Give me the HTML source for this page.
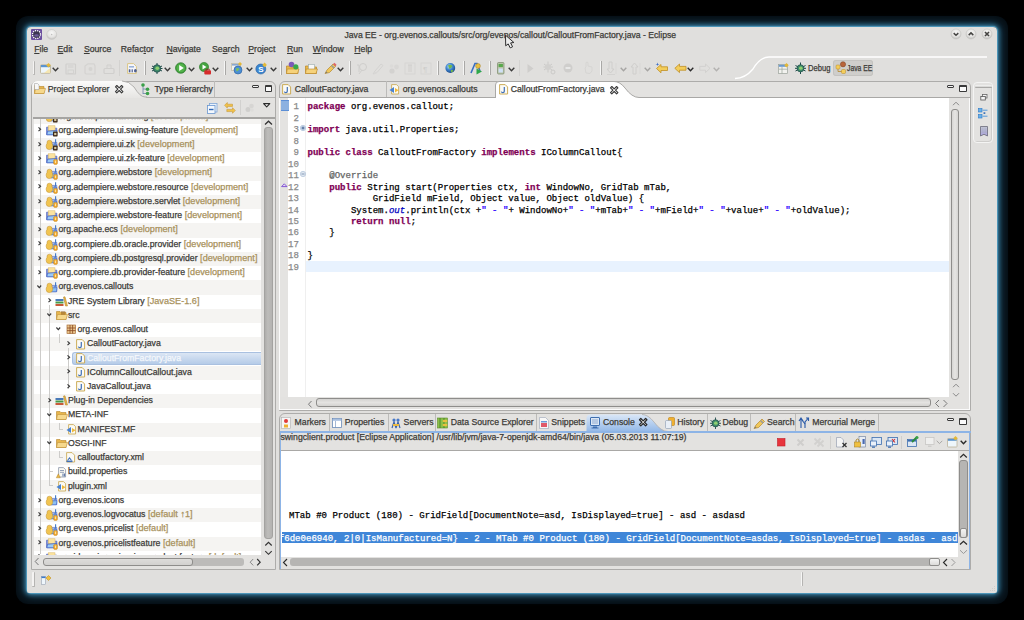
<!DOCTYPE html>
<html><head><meta charset="utf-8">
<style>
*{margin:0;padding:0;box-sizing:border-box}
html,body{width:1024px;height:620px;overflow:hidden;background:#000}
body{position:relative;font-family:"Liberation Sans",sans-serif;font-size:8.7px;color:#3c3c3c}
.a{position:absolute}
svg.a{overflow:visible}
#glow{position:absolute;left:27px;top:27px;width:970px;height:566px;border-radius:4px;box-shadow:0 0 1px 1px rgba(80,155,190,1),0 0 4px 2px rgba(60,135,170,.85),0 0 9px 4px rgba(35,90,120,.7),0 0 0 11px rgba(6,14,20,1)}
#win{position:absolute;left:27px;top:27px;width:970px;height:566px;background:#e0dfdd;border-radius:4px 4px 2px 2px;overflow:hidden}
.t{position:absolute;white-space:pre;line-height:10px;-webkit-text-stroke:0.25px currentColor}
.mono{font-family:"Liberation Mono",monospace;line-height:11px}
.k{color:#7f0055;font-weight:bold}.an{color:#646464}.s{color:#2a00ff}.f{color:#0000c0;font-style:italic}
u{text-decoration:underline;text-underline-offset:1px}
</style></head><body>
<div id="glow"></div>
<div id="win"></div>
<svg class="a" style="left:31px;top:29px" width="11" height="11" viewBox="0 0 11 11"><rect x="0" y="0" width="11" height="11" rx="1" fill="#6b4fa0"/><circle cx="5.5" cy="5.5" r="4" fill="#3a3450" stroke="#fff" stroke-width="1.3" stroke-dasharray="1.2 0.9"/><ellipse cx="5.5" cy="6.5" rx="2.4" ry="1.2" fill="#6a5a98"/></svg>
<svg class="a" style="left:46px;top:29px" width="12" height="12" viewBox="0 0 12 12"><defs><radialGradient id="wbg" cx="50%" cy="35%" r="60%"><stop offset="0" stop-color="#f7f7f6"/><stop offset=".7" stop-color="#e4e3e1"/><stop offset="1" stop-color="#c4c3c1"/></radialGradient></defs><circle cx="5.7" cy="5.5" r="5" fill="url(#wbg)" stroke="#c8c7c5" stroke-width=".6"/><circle cx="5.7" cy="5.5" r=".7" fill="#bbb"/></svg>
<div class="t" style="left:344.50px;top:29.51px;font-size:8.64px;color:#3c3b37;">Java EE - org.evenos.callouts/src/org/evenos/callout/CalloutFromFactory.java - Eclipse</div>
<svg class="a" style="left:949.7px;top:28px" width="12" height="13" viewBox="0 0 12 13"><circle cx="6" cy="6" r="5" fill="url(#wbg)" stroke="#c3c2c0" stroke-width=".6"/><path transform="translate(6 6)" d="M-2.3 -0.9 L0 1.2 L2.3 -0.9" stroke="#454442" stroke-width="1.5" fill="none"/></svg>
<svg class="a" style="left:965.3px;top:28px" width="12" height="13" viewBox="0 0 12 13"><circle cx="6" cy="6" r="5" fill="url(#wbg)" stroke="#c3c2c0" stroke-width=".6"/><path transform="translate(6 6)" d="M-2.3 1.1 L0 -1.1 L2.3 1.1" stroke="#454442" stroke-width="1.5" fill="none"/></svg>
<svg class="a" style="left:980.9px;top:28px" width="12" height="13" viewBox="0 0 12 13"><circle cx="6" cy="6" r="5" fill="url(#wbg)" stroke="#c3c2c0" stroke-width=".6"/><path transform="translate(6 6)" d="M-2 -2 L2 2 M2 -2 L-2 2" stroke="#454442" stroke-width="1.6" fill="none"/></svg>
<div class="a" style="left:33px;top:61px;width:2px;height:14px;background:#f4f3f2;border-right:1px solid #b5b4b2;border-bottom:1px solid #b5b4b2;border-radius:1px"></div>
<svg class="a" style="left:40px;top:63px" width="12" height="11" viewBox="0 0 12 11"><rect x="0.5" y="1.8" width="10" height="8.5" rx=".8" fill="#eef6fb" stroke="#bdb49a" stroke-width=".9"/><rect x="0.9" y="2" width="9.2" height="2.2" fill="#5b94cf"/><path d="M4 9.9 L10.1 9.9 L10.1 5Z" fill="#f6e2a0" opacity=".8"/><path d="M8.5 0 L10.8 2.3 L8.5 4.6 L6.2 2.3Z" fill="#e3b838"/></svg>
<svg class="a" style="left:52px;top:66.5px" width="7" height="5" viewBox="0 0 7 5"><path d="M0.7 0.8 L3.5 3.8 L6.3 0.8" stroke="#3a3a3a" stroke-width="1.4" fill="none"/></svg>
<svg class="a" style="left:65px;top:63px" width="12" height="12" viewBox="0 0 12 12"><rect x="1" y="1" width="9.5" height="10" rx=".6" fill="none" stroke="#d0cfcd" stroke-width="1.2"/><rect x="3" y="1.5" width="5.5" height="3.5" fill="#d8d7d5"/><rect x="3" y="7" width="5.5" height="3.5" fill="none" stroke="#d0cfcd" stroke-width=".8"/></svg>
<svg class="a" style="left:84px;top:63px" width="12" height="12" viewBox="0 0 12 12"><path d="M1 3 L4 0.8 L10 0.8 L11 3 L11 11 L2 11 L1 10Z" fill="none" stroke="#d4d3d1" stroke-width="1.2"/><circle cx="6.5" cy="6" r="2" fill="#d4d3d1"/></svg>
<svg class="a" style="left:103px;top:63px" width="12" height="12" viewBox="0 0 12 12"><rect x="1" y="5.5" width="10" height="5" rx="1" fill="none" stroke="#d0cfcd" stroke-width="1.2"/><path d="M4 6 L4 2 L8 2 L8 6" fill="none" stroke="#d0cfcd" stroke-width="1"/><path d="M6 1 L6 4" stroke="#d8d7d5"/></svg>
<div class="a" style="left:119px;top:60px;width:1px;height:16px;background:#d3d2d0"></div>
<svg class="a" style="left:127px;top:63px" width="11" height="11" viewBox="0 0 11 11"><path d="M0.6 0.6 L6.5 0.6 L9.4 3.4 L9.4 10.4 L0.6 10.4Z" fill="#f7f7fb" stroke="#d8c27a" stroke-width=".9"/><rect x="2" y="3" width="5" height="1.6" fill="#9bb3d9"/><rect x="1.8" y="6.3" width="1.6" height="3" fill="#4d5f90"/><rect x="4.6" y="6.3" width="1.2" height="3" fill="#4d5f90"/><ellipse cx="8.4" cy="7.8" rx="1.4" ry="1.7" fill="#4d5f90"/></svg>
<div class="a" style="left:144px;top:61px;width:1px;height:14px;background:#f6f6f5"></div>
<div class="a" style="left:145px;top:61px;width:1px;height:14px;background:#a9a8a6"></div>
<svg class="a" style="left:151px;top:62px" width="12" height="13" viewBox="0 0 12 13"><g stroke="#1f4a4a" stroke-width="1"><path d="M1 4 L11 9 M1 9 L11 4 M6 1 L6 12 M0.5 6.5 L11.5 6.5"/></g><ellipse cx="6" cy="6.5" rx="3.6" ry="3.8" fill="#3f8a6a" stroke="#1f4a4a" stroke-width=".8"/><ellipse cx="6.3" cy="6.3" rx="1.9" ry="1.7" fill="#8fd070"/></svg>
<svg class="a" style="left:164px;top:66.5px" width="7" height="5" viewBox="0 0 7 5"><path d="M0.7 0.8 L3.5 3.8 L6.3 0.8" stroke="#3a3a3a" stroke-width="1.4" fill="none"/></svg>
<svg class="a" style="left:175px;top:62px" width="12" height="12" viewBox="0 0 12 12"><circle cx="5.8" cy="6" r="5.3" fill="#3f9b3c" stroke="#2b7a2a" stroke-width=".7"/><circle cx="5.8" cy="6" r="4.2" fill="#52b34a"/><path d="M4.2 3 L8.8 6 L4.2 9Z" fill="#fff"/></svg>
<svg class="a" style="left:188px;top:66.5px" width="7" height="5" viewBox="0 0 7 5"><path d="M0.7 0.8 L3.5 3.8 L6.3 0.8" stroke="#3a3a3a" stroke-width="1.4" fill="none"/></svg>
<svg class="a" style="left:199px;top:62px" width="13" height="13" viewBox="0 0 13 13"><circle cx="5" cy="5" r="4.6" fill="#44a340" stroke="#2b7a2a" stroke-width=".6"/><path d="M3.5 2.6 L7.5 5 L3.5 7.4Z" fill="#fff"/><rect x="5.3" y="8.2" width="6.7" height="4.3" rx="1" fill="#d62c2c"/><path d="M7 8.3 L7 7.2 L10.3 7.2 L10.3 8.3" stroke="#8a1f1f" stroke-width=".8" fill="none"/></svg>
<svg class="a" style="left:212px;top:66.5px" width="7" height="5" viewBox="0 0 7 5"><path d="M0.7 0.8 L3.5 3.8 L6.3 0.8" stroke="#3a3a3a" stroke-width="1.4" fill="none"/></svg>
<div class="a" style="left:224px;top:61px;width:1px;height:14px;background:#f6f6f5"></div>
<div class="a" style="left:225px;top:61px;width:1px;height:14px;background:#a9a8a6"></div>
<svg class="a" style="left:231px;top:62px" width="12" height="13" viewBox="0 0 12 13"><rect x=".5" y="1.5" width="9" height="7" fill="#f2f2ef" stroke="#c7c0a8" stroke-width=".8"/><rect x=".9" y="1.8" width="8.2" height="1.8" fill="#8aa7cf"/><circle cx="7" cy="8" r="4" fill="#4b8fd4" stroke="#2a5d9c" stroke-width=".6"/><path d="M5 6.5 Q7 5.5 8.5 7 Q7 9 5.5 9.5Z" fill="#7fc15a"/><path d="M9 0 L11 2 L9 4 L7 2Z" fill="#e3b838"/></svg>
<svg class="a" style="left:246px;top:66.5px" width="7" height="5" viewBox="0 0 7 5"><path d="M0.7 0.8 L3.5 3.8 L6.3 0.8" stroke="#3a3a3a" stroke-width="1.4" fill="none"/></svg>
<svg class="a" style="left:255px;top:62px" width="13" height="13" viewBox="0 0 13 13"><circle cx="5.8" cy="7" r="5" fill="#3b85cf" stroke="#2a62a0" stroke-width=".6"/><text x="3.3" y="10" font-family="Liberation Sans" font-weight="bold" font-size="8" fill="#fff">S</text><path d="M9.6 0.6 L11.9 2.9 L9.6 5.2 L7.3 2.9Z" fill="#e3b838"/></svg>
<svg class="a" style="left:270px;top:66.5px" width="7" height="5" viewBox="0 0 7 5"><path d="M0.7 0.8 L3.5 3.8 L6.3 0.8" stroke="#3a3a3a" stroke-width="1.4" fill="none"/></svg>
<div class="a" style="left:280px;top:61px;width:1px;height:14px;background:#f6f6f5"></div>
<div class="a" style="left:281px;top:61px;width:1px;height:14px;background:#a9a8a6"></div>
<svg class="a" style="left:286px;top:61px" width="14" height="14" viewBox="0 0 14 14"><path d="M0.5 5 L4.5 5 L5.5 6 L12 6 L12 12.5 L0.5 12.5Z" fill="#e9b748" stroke="#b8862a" stroke-width=".7"/><path d="M1.2 8 L13 8 L11.5 12.5 L0.5 12.5Z" fill="#f6d27a" stroke="#b8862a" stroke-width=".6"/><circle cx="5.5" cy="3.5" r="2.8" fill="#7d5ab8"/><circle cx="9.8" cy="5.8" r="2.6" fill="#39a94a"/></svg>
<svg class="a" style="left:305px;top:62px" width="13" height="13" viewBox="0 0 13 13"><path d="M0.5 4 L4.5 4 L5.5 5 L11.5 5 L11.5 11.5 L0.5 11.5Z" fill="#e9b748" stroke="#b8862a" stroke-width=".7"/><rect x="3.5" y="2.5" width="6" height="5" fill="#f8f8f8" stroke="#9aa" stroke-width=".6"/><path d="M1.2 7 L12.5 7 L11 11.5 L0.5 11.5Z" fill="#f6d27a" stroke="#b8862a" stroke-width=".6"/></svg>
<svg class="a" style="left:324px;top:62px" width="13" height="13" viewBox="0 0 13 13"><path d="M1 11.5 L3 8 L9 2 L11.5 4.5 L5.5 10.5Z" fill="#f0c75a" stroke="#b5882f" stroke-width=".7"/><path d="M7.5 3.5 L10 6" stroke="#9a9a9a" stroke-width="1.6"/><path d="M1 11.5 L2.5 9.5 L3.5 10.5Z" fill="#777"/><path d="M9 2 L10.5 0.8 L12.5 2.8 L11.5 4.5Z" fill="#d66"/></svg>
<svg class="a" style="left:337px;top:66.5px" width="7" height="5" viewBox="0 0 7 5"><path d="M0.7 0.8 L3.5 3.8 L6.3 0.8" stroke="#3a3a3a" stroke-width="1.4" fill="none"/></svg>
<div class="a" style="left:349px;top:61px;width:1px;height:14px;background:#f6f6f5"></div>
<div class="a" style="left:350px;top:61px;width:1px;height:14px;background:#a9a8a6"></div>
<svg class="a" style="left:355px;top:62px" width="13" height="14" viewBox="0 0 13 14"><g fill="none" stroke="#cfcecc" stroke-width="1"><circle cx="8" cy="5" r="3.5"/><path d="M2 3 L4 3 L4 10 M4 12 L7 8"/></g></svg>
<svg class="a" style="left:372px;top:62px" width="12" height="13" viewBox="0 0 12 13"><path d="M1 12 L3 9 L9 2 L11 3.5 L5 10.5Z" fill="none" stroke="#d4d3d1" stroke-width="1"/><path d="M2 12 L5 10" stroke="#d8d7d5" stroke-width="1.5"/></svg>
<svg class="a" style="left:388px;top:62px" width="12" height="13" viewBox="0 0 12 13"><circle cx="4" cy="9" r="2.6" fill="#d3d2d0"/><circle cx="8.5" cy="5" r="2.4" fill="#d8d7d5"/><circle cx="3.5" cy="4" r="1.8" fill="#dbdad8"/></svg>
<svg class="a" style="left:404px;top:62px" width="12" height="13" viewBox="0 0 12 13"><rect x="1" y="1" width="10" height="11" fill="none" stroke="#d6d5d3" stroke-width="1"/><path d="M5 3 L5 10 M7 3 L7 10 M4 3 L8 3" stroke="#cfcecc" stroke-width=".9"/></svg>
<svg class="a" style="left:420px;top:62px" width="12" height="13" viewBox="0 0 12 13"><rect x="1" y="1" width="10" height="11" fill="none" stroke="#d6d5d3" stroke-width="1"/><text x="3" y="10" font-family="Liberation Sans" font-size="8" fill="#cfcecc">¶</text></svg>
<div class="a" style="left:437px;top:61px;width:1px;height:14px;background:#f6f6f5"></div>
<div class="a" style="left:438px;top:61px;width:1px;height:14px;background:#a9a8a6"></div>
<svg class="a" style="left:445px;top:62px" width="11" height="12" viewBox="0 0 11 12"><defs><radialGradient id="glb" cx="40%" cy="35%" r="65%"><stop offset="0" stop-color="#bfe3ff"/><stop offset=".5" stop-color="#3f86d0"/><stop offset="1" stop-color="#1f4f8f"/></radialGradient></defs><circle cx="5.3" cy="6" r="4.9" fill="url(#glb)"/><path d="M3 3.5 Q5.5 2 7.5 4 Q6 6.5 4.5 7 Z M6 8 Q8 7.5 8.5 9 Q7 10.5 6 10Z" fill="#74b84a"/></svg>
<div class="a" style="left:462.5px;top:61px;width:1px;height:14px;background:#f6f6f5"></div>
<div class="a" style="left:463.5px;top:61px;width:1px;height:14px;background:#a9a8a6"></div>
<svg class="a" style="left:470px;top:62px" width="13" height="13" viewBox="0 0 13 13"><path d="M1 11 L5 1.5 L7 1.5 L10 9" fill="none" stroke="#3a6fc0" stroke-width="1.6"/><circle cx="8" cy="4" r="2.4" fill="#e8c040" stroke="#a67c20" stroke-width=".5"/><path d="M6.5 6.5 L12 9.5 L6.5 12.5Z" fill="#2ea84a"/></svg>
<div class="a" style="left:489px;top:61px;width:1px;height:14px;background:#f6f6f5"></div>
<div class="a" style="left:490px;top:61px;width:1px;height:14px;background:#a9a8a6"></div>
<svg class="a" style="left:497px;top:62px" width="8" height="13" viewBox="0 0 8 13"><rect x=".5" y=".5" width="6.5" height="11.5" rx="1" fill="#b9c3a8" stroke="#7a8a6a" stroke-width=".7"/><rect x="1.6" y="2" width="4.3" height="3" fill="#58a84c"/><rect x="1.6" y="6.5" width="4.3" height="4" fill="#cfe0f4"/></svg>
<svg class="a" style="left:508px;top:66.5px" width="7" height="5" viewBox="0 0 7 5"><path d="M0.7 0.8 L3.5 3.8 L6.3 0.8" stroke="#3a3a3a" stroke-width="1.4" fill="none"/></svg>
<div class="a" style="left:518.5px;top:60px;width:1px;height:16px;background:#d3d2d0"></div>
<svg class="a" style="left:526px;top:62px" width="9" height="13" viewBox="0 0 9 13"><path d="M1.5 2 L7.5 6.5 L1.5 11Z" fill="#cfcecc"/></svg>
<svg class="a" style="left:543px;top:61px" width="13" height="14" viewBox="0 0 13 14"><g stroke="#cbcac8" stroke-width="1"><path d="M1 3 L9 9 M1 9 L9 3 M5 0.5 L5 11.5 M0.5 6 L10 6"/></g><circle cx="5" cy="6" r="3" fill="#d2d1cf"/><circle cx="10" cy="11" r="2" fill="none" stroke="#cbcac8"/></svg>
<svg class="a" style="left:563px;top:62px" width="11" height="12" viewBox="0 0 11 12"><circle cx="5" cy="6" r="4.5" fill="#cfcecc"/><rect x="2.5" y="5.2" width="5" height="1.6" fill="#eee"/></svg>
<svg class="a" style="left:582px;top:61px" width="12" height="14" viewBox="0 0 12 14"><path d="M4 12 L3 7 L4 6 L4 1.5 Q5 0.8 6 1.5 L6 5 L10 6 L10 10 L8 12.5Z" fill="none" stroke="#d6d5d3" stroke-width="1"/></svg>
<div class="a" style="left:600px;top:61px;width:1px;height:14px;background:#f6f6f5"></div>
<div class="a" style="left:601px;top:61px;width:1px;height:14px;background:#a9a8a6"></div>
<svg class="a" style="left:606px;top:61px" width="11" height="15" viewBox="0 0 11 15"><path d="M3 1 L6 1 L6 8 L8 8 L4.5 12 L1 8 L3 8Z" fill="none" stroke="#cfcecc" stroke-width="1"/><path d="M1 13.5 L9 13.5" stroke="#d4d3d1"/><path d="M10 2 L10 13" stroke="#d8d7d5"/></svg>
<svg class="a" style="left:620px;top:66.5px" width="7" height="5" viewBox="0 0 7 5"><path d="M0.7 0.8 L3.5 3.8 L6.3 0.8" stroke="#a6a5a3" stroke-width="1.4" fill="none"/></svg>
<svg class="a" style="left:630px;top:61px" width="11" height="15" viewBox="0 0 11 15"><path d="M3 13 L6 13 L6 6 L8 6 L4.5 2 L1 6 L3 6Z" fill="none" stroke="#cfcecc" stroke-width="1"/><path d="M10 2 L10 13" stroke="#d8d7d5"/></svg>
<svg class="a" style="left:644px;top:66.5px" width="7" height="5" viewBox="0 0 7 5"><path d="M0.7 0.8 L3.5 3.8 L6.3 0.8" stroke="#a6a5a3" stroke-width="1.4" fill="none"/></svg>
<svg class="a" style="left:655px;top:62px" width="14" height="12" viewBox="0 0 14 12"><path d="M1.5 6.5 L6 2.5 L6 4.8 L12.5 4.8 L12.5 8.5 L6 8.5 L6 10.8Z" fill="#f3cd5a" stroke="#c08f25" stroke-width=".8"/><path d="M2.5 0.5 L3 2 L4.5 2.3 L3 2.7 L2.5 4 L2 2.7 L0.5 2.3 L2 2Z" fill="#3c6fc5"/></svg>
<svg class="a" style="left:674px;top:62px" width="13" height="12" viewBox="0 0 13 12"><path d="M0.8 6.3 L5.5 2 L5.5 4.4 L12 4.4 L12 8.2 L5.5 8.2 L5.5 10.6Z" fill="#f3cd5a" stroke="#c08f25" stroke-width=".8"/></svg>
<svg class="a" style="left:687px;top:66.5px" width="7" height="5" viewBox="0 0 7 5"><path d="M0.7 0.8 L3.5 3.8 L6.3 0.8" stroke="#2a2a2a" stroke-width="1.4" fill="none"/></svg>
<svg class="a" style="left:699px;top:62px" width="12" height="12" viewBox="0 0 12 12"><path d="M11 6.3 L6.5 2 L6.5 4.4 L0.8 4.4 L0.8 8.2 L6.5 8.2 L6.5 10.6Z" fill="none" stroke="#d2d1cf" stroke-width="1"/></svg>
<svg class="a" style="left:713px;top:66.5px" width="7" height="5" viewBox="0 0 7 5"><path d="M0.7 0.8 L3.5 3.8 L6.3 0.8" stroke="#b3b2b0" stroke-width="1.4" fill="none"/></svg>
<svg class="a" style="left:735px;top:55px" width="260" height="26" viewBox="0 0 260 26"><path d="M0 23.5 Q10 23.5 18 14 Q25 2 34 2 L252 2" fill="none" stroke="#ffffff" stroke-width="1.3"/></svg>
<svg class="a" style="left:778px;top:63px" width="11" height="11" viewBox="0 0 11 11"><rect x=".5" y="1.5" width="9" height="9" fill="#f2f2ef" stroke="#9aa39a" stroke-width=".7"/><rect x=".8" y="1.8" width="8.4" height="2" fill="#6a9ad0"/><path d="M1 6.2 L9.5 6.2 M4 4 L4 10.5" stroke="#9aa39a" stroke-width=".7"/><path d="M8.5 0 L10.7 2.2 L8.5 4.4 L6.3 2.2Z" fill="#e3b838"/></svg>
<svg class="a" style="left:795px;top:62px" width="11" height="13" viewBox="0 0 11 13"><g stroke="#1f4a4a" stroke-width="1"><path d="M0.5 3.5 L10.5 9 M0.5 9 L10.5 3.5 M5.5 0.5 L5.5 12 M0 6.3 L11 6.3"/></g><ellipse cx="5.5" cy="6.3" rx="3.4" ry="3.6" fill="#3f8a6a" stroke="#1f4a4a" stroke-width=".7"/><ellipse cx="5.8" cy="6.2" rx="1.8" ry="1.6" fill="#8fd070"/></svg>
<div class="t" style="left:807.80px;top:62.99px;font-size:8.7px;color:#3c3b37;transform:scaleX(.875);transform-origin:0 0">Debug</div>
<div class="a" style="left:833px;top:60px;width:40px;height:15.5px;background:#cfcecb;border-radius:3px;box-shadow:inset 0 0 0 1px #c4c3c0"></div>
<svg class="a" style="left:835px;top:61px" width="12" height="14" viewBox="0 0 12 14"><path d="M3 5 L3 10.5 L8 10.5" stroke="#b88a2a" stroke-width=".8" fill="none"/><rect x="1" y="4" width="4" height="4" rx="1" fill="#f3cd5a" stroke="#b88a2a" stroke-width=".5"/><rect x="6.5" y="8.5" width="4" height="4" rx="1" fill="#f3cd5a" stroke="#b88a2a" stroke-width=".5"/><circle cx="8" cy="3.3" r="2.6" fill="#b8643a" stroke="#7a3e20" stroke-width=".5"/></svg>
<div class="t" style="left:847.00px;top:62.99px;font-size:8.7px;color:#3c3b37;transform:scaleX(.78);transform-origin:0 0">Java EE</div>
<div class="a" style="left:31px;top:80.5px;width:244.5px;height:489.5px;border:1px solid #adacaa;border-radius:6px 6px 0 0;background:#e3e2e0"></div>
<svg class="a" style="left:32px;top:81px" width="115" height="17" viewBox="0 0 115 17"><defs><linearGradient id="tabg" x1="0" y1="0" x2="0" y2="1"><stop offset="0" stop-color="#fbfbfa"/><stop offset="1" stop-color="#e6e5e3"/></linearGradient></defs><path d="M0 17 L0 5.5 Q0 0 5.5 0 L90 0 Q97 0 102 6 Q108 16 113 16 L115 16 L115 17Z" fill="url(#tabg)"/><path d="M90 0 Q97 0 102 6 Q108 16 113 16 L115 16" fill="none" stroke="#a9a8a6" stroke-width=".9"/></svg>
<div class="a" style="left:146px;top:97px;width:129px;height:1px;background:#b3b2b0"></div>
<div class="a" style="left:214px;top:81px;width:1px;height:16px;background:#bdbcba"></div>
<svg class="a" style="left:34px;top:83.5px" width="12" height="11" viewBox="0 0 12 11"><path d="M0.5 1.5 L4 1.5 L5 2.5 L10 2.5 L10 9.5 L0.5 9.5Z" fill="#e8b64c" stroke="#b5842a" stroke-width=".6"/><path d="M1.5 4.5 L11.5 4.5 L10 9.5 L0.5 9.5Z" fill="#f6d88c" stroke="#c0923a" stroke-width=".6"/></svg>
<svg class="a" style="left:34px;top:83px" width="6" height="7" viewBox="0 0 6 7"><path d="M0.5 0.5 L3.5 0.5 L5 2 L5 6.5 L0.5 6.5Z" fill="#f7f7f7" stroke="#999" stroke-width=".5"/></svg>
<div class="t" style="left:47.70px;top:83.99px;font-size:8.7px;color:#3c3b37;">Project Explorer</div>
<svg class="a" style="left:114.5px;top:85.3px" width="9" height="9" viewBox="0 0 9 9"><path d="M0.5 1.8 L1.8 0.5 L4.2 2.9 L6.6 0.5 L7.9 1.8 L5.5 4.2 L7.9 6.6 L6.6 7.9 L4.2 5.5 L1.8 7.9 L0.5 6.6 L2.9 4.2Z" fill="#fbfbfb" stroke="#3a3a3a" stroke-width="1.1" stroke-linejoin="round"/></svg>
<svg class="a" style="left:140.5px;top:82.5px" width="9" height="13" viewBox="0 0 9 13"><path d="M2 1.5 L2 11 M2 6 L6 6 M2 10.5 L6 10.5" stroke="#6a86a8" stroke-width=".8" fill="none"/><circle cx="2" cy="2" r="1.8" fill="#3aa048"/><circle cx="6.5" cy="6.2" r="1.8" fill="#3aa048"/><circle cx="6.5" cy="10.5" r="1.8" fill="#3aa048"/></svg>
<div class="t" style="left:154.50px;top:83.99px;font-size:8.7px;color:#3c3b37;">Type Hierarchy</div>
<div class="a" style="left:252px;top:84.5px;width:7px;height:3.5px;border:1px solid #3a3a3a;border-radius:1px;background:#f4f4f4"></div>
<div class="a" style="left:264.5px;top:84.5px;width:7.5px;height:7.5px;border:1px solid #3a3a3a;border-top-width:2px;border-radius:1px;background:#fafafa"></div>
<svg class="a" style="left:207px;top:102.5px" width="11" height="11" viewBox="0 0 11 11"><rect x="2.5" y="0.5" width="7.5" height="8.5" fill="#eaf2fb" stroke="#7fa6d6" stroke-width=".8"/><rect x="0.5" y="2.5" width="7.5" height="8" fill="#f4f8fd" stroke="#6a96cf" stroke-width=".8"/><rect x="2" y="5.8" width="4.5" height="1.4" fill="#2f68b8"/></svg>
<svg class="a" style="left:224px;top:102px" width="12" height="12" viewBox="0 0 12 12"><path d="M0.5 3.3 L3.3 0.5 L3.3 2.2 L8.5 2.2 L8.5 4.4 L3.3 4.4 L3.3 6.1Z" fill="#f2c24a" stroke="#c0902a" stroke-width=".5"/><path d="M11.3 8.5 L8.5 5.7 L8.5 7.4 L2.8 7.4 L2.8 9.6 L8.5 9.6 L8.5 11.3Z" fill="#f2c24a" stroke="#c0902a" stroke-width=".5"/></svg>
<div class="a" style="left:239.5px;top:100px;width:1px;height:15px;background:#d2d1cf"></div>
<svg class="a" style="left:245px;top:103px" width="10" height="10" viewBox="0 0 10 10"><circle cx="3" cy="6.5" r="2.5" fill="#d0cfcd"/><circle cx="6.5" cy="3" r="2.3" fill="#d6d5d3"/><circle cx="7" cy="7" r="1.8" fill="#dddcda"/></svg>
<svg class="a" style="left:263px;top:103.2px" width="8" height="5" viewBox="0 0 8 5"><path d="M0.6 0.6 L6.8 0.6 L3.7 3.9Z" fill="#fafafa" stroke="#2a2a2a" stroke-width="1.1" stroke-linejoin="round"/></svg>
<div class="a" style="left:32.5px;top:117px;width:242px;height:2px;background:#a5a4a2"></div>
<div class="a" style="left:34px;top:119px;width:227px;height:435.5px;overflow:hidden;background:#fff">
<div class="a" style="left:0px;top:-9.53px;width:227px;height:14.235px;background:#f5f4f2"></div>
<div class="a" style="left:0px;top:18.94px;width:227px;height:14.235px;background:#f5f4f2"></div>
<div class="a" style="left:0px;top:47.41px;width:227px;height:14.235px;background:#f5f4f2"></div>
<div class="a" style="left:0px;top:75.88px;width:227px;height:14.235px;background:#f5f4f2"></div>
<div class="a" style="left:0px;top:104.34px;width:227px;height:14.235px;background:#f5f4f2"></div>
<div class="a" style="left:0px;top:132.82px;width:227px;height:14.235px;background:#f5f4f2"></div>
<div class="a" style="left:0px;top:161.28px;width:227px;height:14.235px;background:#f5f4f2"></div>
<div class="a" style="left:0px;top:189.75px;width:227px;height:14.235px;background:#f5f4f2"></div>
<div class="a" style="left:0px;top:218.22px;width:227px;height:14.235px;background:#f5f4f2"></div>
<div class="a" style="left:0px;top:246.69px;width:227px;height:14.235px;background:#f5f4f2"></div>
<div class="a" style="left:0px;top:275.16px;width:227px;height:14.235px;background:#f5f4f2"></div>
<div class="a" style="left:0px;top:303.63px;width:227px;height:14.235px;background:#f5f4f2"></div>
<div class="a" style="left:0px;top:332.1px;width:227px;height:14.235px;background:#f5f4f2"></div>
<div class="a" style="left:0px;top:360.57px;width:227px;height:14.235px;background:#f5f4f2"></div>
<div class="a" style="left:0px;top:389.04px;width:227px;height:14.235px;background:#f5f4f2"></div>
<div class="a" style="left:0px;top:417.51px;width:227px;height:14.235px;background:#f5f4f2"></div>
<div class="a" style="left:5.5px;top:0px;width:1px;height:435px;background:#cdccca"></div>
<div class="a" style="left:15px;top:186.42px;width:1px;height:180.06px;background:#cdccca"></div>
<div class="a" style="left:15px;top:366.48px;width:4px;height:1px;background:#cdccca"></div>
<div class="a" style="left:24.5px;top:214.89px;width:1px;height:9.23px;background:#cdccca"></div>
<div class="a" style="left:34px;top:229.12px;width:1px;height:40.71px;background:#cdccca"></div>
<div class="a" style="left:24.5px;top:303.54px;width:1px;height:6.0px;background:#cdccca"></div>
<div class="a" style="left:24.5px;top:309.54px;width:4.5px;height:1px;background:#cdccca"></div>
<div class="a" style="left:24.5px;top:332.0px;width:1px;height:6.0px;background:#cdccca"></div>
<div class="a" style="left:24.5px;top:338.0px;width:4.5px;height:1px;background:#cdccca"></div>
<div class="a" style="left:15px;top:352.24px;width:4px;height:1px;background:#cdccca"></div>
<svg class="a" style="left:4.2px;top:-5.83px" width="4" height="5" viewBox="0 0 4 5"><path d="M0.5 0.4 L2.6 2.2 L0.5 4.1" stroke="#3a3a3a" stroke-width="1.15" fill="none"/></svg>
<svg class="a" style="left:11.5px;top:-8.23px" width="12" height="12" viewBox="0 0 12 12"><path d="M2 2.5 L5 2.5 L6 3.4 L10.8 3.4 L10.8 9.6 L2 9.6Z" fill="#9fb4e8" stroke="#5a6ab8" stroke-width=".6"/><path d="M5 6 L11 5.6 L10.4 9.8 L5 9.8Z" fill="#8cc0f2" stroke="#3a5cc4" stroke-width=".6"/><path d="M3.3 1.2 Q6 1.2 6 3.6 L6 4.6 Q7 5.6 6.6 7.6 Q6.4 10.6 3.3 10.6 Q0.2 10.6 0.2 7.6 Q0 5.6 1 4.6 L1 3.6 Q1 1.2 3.3 1.2Z" fill="#f1c450" stroke="#c09030" stroke-width=".5"/><path d="M9.6 0.3 L9.6 3.6 Q9.6 4.8 8.4 4.8" stroke="#3f78c8" stroke-width="1.1" fill="none"/><rect x="7" y="6.6" width="4.6" height="4.8" rx=".6" fill="#3e2a1a"/><rect x="8.2" y="7.9" width="2.2" height="2.2" fill="#d8c9a0"/></svg>
<div class="t" style="left:24.50px;top:-8.45px;font-size:8.7px;color:#3c3b37;">org.adempiere.ui.swing<span style="color:#a8915c;font-size:9.15px"> [development]</span></div>
<svg class="a" style="left:4.2px;top:8.4px" width="4" height="5" viewBox="0 0 4 5"><path d="M0.5 0.4 L2.6 2.2 L0.5 4.1" stroke="#3a3a3a" stroke-width="1.15" fill="none"/></svg>
<svg class="a" style="left:11.5px;top:6.0px" width="12" height="12" viewBox="0 0 12 12"><path d="M0.6 2.2 L4 2.2 L5 3.2 L10.8 3.2 L10.8 9.6 L0.6 9.6Z" fill="#8a9ee0" stroke="#4f5fb8" stroke-width=".7"/><rect x="2.2" y="0.8" width="6.8" height="5" fill="#fbe3a0" stroke="#d9b460" stroke-width=".5"/><path d="M1.6 6.2 L11 5.4 L10.2 9.8 L0.8 9.8Z" fill="#9ccaf4" stroke="#3a5cc4" stroke-width=".7"/><rect x="7" y="6.6" width="4.6" height="4.8" rx=".6" fill="#3e2a1a"/><rect x="8.2" y="7.9" width="2.2" height="2.2" fill="#d8c9a0"/></svg>
<div class="t" style="left:24.50px;top:5.79px;font-size:8.7px;color:#3c3b37;">org.adempiere.ui.swing-feature<span style="color:#a8915c;font-size:9.15px"> [development]</span></div>
<svg class="a" style="left:4.2px;top:22.64px" width="4" height="5" viewBox="0 0 4 5"><path d="M0.5 0.4 L2.6 2.2 L0.5 4.1" stroke="#3a3a3a" stroke-width="1.15" fill="none"/></svg>
<svg class="a" style="left:11.5px;top:20.24px" width="12" height="12" viewBox="0 0 12 12"><path d="M2 2.5 L5 2.5 L6 3.4 L10.8 3.4 L10.8 9.6 L2 9.6Z" fill="#9fb4e8" stroke="#5a6ab8" stroke-width=".6"/><path d="M5 6 L11 5.6 L10.4 9.8 L5 9.8Z" fill="#8cc0f2" stroke="#3a5cc4" stroke-width=".6"/><path d="M3.3 1.2 Q6 1.2 6 3.6 L6 4.6 Q7 5.6 6.6 7.6 Q6.4 10.6 3.3 10.6 Q0.2 10.6 0.2 7.6 Q0 5.6 1 4.6 L1 3.6 Q1 1.2 3.3 1.2Z" fill="#f1c450" stroke="#c09030" stroke-width=".5"/><path d="M9.6 0.3 L9.6 3.6 Q9.6 4.8 8.4 4.8" stroke="#3f78c8" stroke-width="1.1" fill="none"/><rect x="7" y="6.6" width="4.6" height="4.8" rx=".6" fill="#3e2a1a"/><rect x="8.2" y="7.9" width="2.2" height="2.2" fill="#d8c9a0"/></svg>
<div class="t" style="left:24.50px;top:20.02px;font-size:8.7px;color:#3c3b37;">org.adempiere.ui.zk<span style="color:#a8915c;font-size:9.15px"> [development]</span></div>
<svg class="a" style="left:4.2px;top:36.87px" width="4" height="5" viewBox="0 0 4 5"><path d="M0.5 0.4 L2.6 2.2 L0.5 4.1" stroke="#3a3a3a" stroke-width="1.15" fill="none"/></svg>
<svg class="a" style="left:11.5px;top:34.47px" width="12" height="12" viewBox="0 0 12 12"><path d="M0.6 2.2 L4 2.2 L5 3.2 L10.8 3.2 L10.8 9.6 L0.6 9.6Z" fill="#8a9ee0" stroke="#4f5fb8" stroke-width=".7"/><rect x="2.2" y="0.8" width="6.8" height="5" fill="#fbe3a0" stroke="#d9b460" stroke-width=".5"/><path d="M1.6 6.2 L11 5.4 L10.2 9.8 L0.8 9.8Z" fill="#9ccaf4" stroke="#3a5cc4" stroke-width=".7"/><rect x="7.6" y="6.4" width="3.8" height="5" rx="1.2" fill="#f2a82a" stroke="#b87818" stroke-width=".4"/><rect x="8.9" y="7.6" width="1.2" height="2.5" fill="#fbe0a0"/></svg>
<div class="t" style="left:24.50px;top:34.26px;font-size:8.7px;color:#3c3b37;">org.adempiere.ui.zk-feature<span style="color:#a8915c;font-size:9.15px"> [development]</span></div>
<svg class="a" style="left:4.2px;top:51.11px" width="4" height="5" viewBox="0 0 4 5"><path d="M0.5 0.4 L2.6 2.2 L0.5 4.1" stroke="#3a3a3a" stroke-width="1.15" fill="none"/></svg>
<svg class="a" style="left:11.5px;top:48.71px" width="12" height="12" viewBox="0 0 12 12"><path d="M2 2.5 L5 2.5 L6 3.4 L10.8 3.4 L10.8 9.6 L2 9.6Z" fill="#9fb4e8" stroke="#5a6ab8" stroke-width=".6"/><path d="M5 6 L11 5.6 L10.4 9.8 L5 9.8Z" fill="#8cc0f2" stroke="#3a5cc4" stroke-width=".6"/><path d="M3.3 1.2 Q6 1.2 6 3.6 L6 4.6 Q7 5.6 6.6 7.6 Q6.4 10.6 3.3 10.6 Q0.2 10.6 0.2 7.6 Q0 5.6 1 4.6 L1 3.6 Q1 1.2 3.3 1.2Z" fill="#f1c450" stroke="#c09030" stroke-width=".5"/><path d="M9.6 0.3 L9.6 3.6 Q9.6 4.8 8.4 4.8" stroke="#3f78c8" stroke-width="1.1" fill="none"/><rect x="7.6" y="6.4" width="3.8" height="5" rx="1.2" fill="#f2a82a" stroke="#b87818" stroke-width=".4"/><rect x="8.9" y="7.6" width="1.2" height="2.5" fill="#fbe0a0"/></svg>
<div class="t" style="left:24.50px;top:48.49px;font-size:8.7px;color:#3c3b37;">org.adempiere.webstore<span style="color:#a8915c;font-size:9.15px"> [development]</span></div>
<svg class="a" style="left:4.2px;top:65.34px" width="4" height="5" viewBox="0 0 4 5"><path d="M0.5 0.4 L2.6 2.2 L0.5 4.1" stroke="#3a3a3a" stroke-width="1.15" fill="none"/></svg>
<svg class="a" style="left:11.5px;top:62.94px" width="12" height="12" viewBox="0 0 12 12"><path d="M2 2.5 L5 2.5 L6 3.4 L10.8 3.4 L10.8 9.6 L2 9.6Z" fill="#9fb4e8" stroke="#5a6ab8" stroke-width=".6"/><path d="M5 6 L11 5.6 L10.4 9.8 L5 9.8Z" fill="#8cc0f2" stroke="#3a5cc4" stroke-width=".6"/><path d="M3.3 1.2 Q6 1.2 6 3.6 L6 4.6 Q7 5.6 6.6 7.6 Q6.4 10.6 3.3 10.6 Q0.2 10.6 0.2 7.6 Q0 5.6 1 4.6 L1 3.6 Q1 1.2 3.3 1.2Z" fill="#f1c450" stroke="#c09030" stroke-width=".5"/><path d="M9.6 0.3 L9.6 3.6 Q9.6 4.8 8.4 4.8" stroke="#3f78c8" stroke-width="1.1" fill="none"/><rect x="7.6" y="6.4" width="3.8" height="5" rx="1.2" fill="#f2a82a" stroke="#b87818" stroke-width=".4"/><rect x="8.9" y="7.6" width="1.2" height="2.5" fill="#fbe0a0"/></svg>
<div class="t" style="left:24.50px;top:62.73px;font-size:8.7px;color:#3c3b37;">org.adempiere.webstore.resource<span style="color:#a8915c;font-size:9.15px"> [development]</span></div>
<svg class="a" style="left:4.2px;top:79.58px" width="4" height="5" viewBox="0 0 4 5"><path d="M0.5 0.4 L2.6 2.2 L0.5 4.1" stroke="#3a3a3a" stroke-width="1.15" fill="none"/></svg>
<svg class="a" style="left:11.5px;top:77.18px" width="12" height="12" viewBox="0 0 12 12"><path d="M2 2.5 L5 2.5 L6 3.4 L10.8 3.4 L10.8 9.6 L2 9.6Z" fill="#9fb4e8" stroke="#5a6ab8" stroke-width=".6"/><path d="M5 6 L11 5.6 L10.4 9.8 L5 9.8Z" fill="#8cc0f2" stroke="#3a5cc4" stroke-width=".6"/><path d="M3.3 1.2 Q6 1.2 6 3.6 L6 4.6 Q7 5.6 6.6 7.6 Q6.4 10.6 3.3 10.6 Q0.2 10.6 0.2 7.6 Q0 5.6 1 4.6 L1 3.6 Q1 1.2 3.3 1.2Z" fill="#f1c450" stroke="#c09030" stroke-width=".5"/><path d="M9.6 0.3 L9.6 3.6 Q9.6 4.8 8.4 4.8" stroke="#3f78c8" stroke-width="1.1" fill="none"/><rect x="7.6" y="6.4" width="3.8" height="5" rx="1.2" fill="#f2a82a" stroke="#b87818" stroke-width=".4"/><rect x="8.9" y="7.6" width="1.2" height="2.5" fill="#fbe0a0"/></svg>
<div class="t" style="left:24.50px;top:76.96px;font-size:8.7px;color:#3c3b37;">org.adempiere.webstore.servlet<span style="color:#a8915c;font-size:9.15px"> [development]</span></div>
<svg class="a" style="left:4.2px;top:93.81px" width="4" height="5" viewBox="0 0 4 5"><path d="M0.5 0.4 L2.6 2.2 L0.5 4.1" stroke="#3a3a3a" stroke-width="1.15" fill="none"/></svg>
<svg class="a" style="left:11.5px;top:91.41px" width="12" height="12" viewBox="0 0 12 12"><path d="M0.6 2.2 L4 2.2 L5 3.2 L10.8 3.2 L10.8 9.6 L0.6 9.6Z" fill="#8a9ee0" stroke="#4f5fb8" stroke-width=".7"/><rect x="2.2" y="0.8" width="6.8" height="5" fill="#fbe3a0" stroke="#d9b460" stroke-width=".5"/><path d="M1.6 6.2 L11 5.4 L10.2 9.8 L0.8 9.8Z" fill="#9ccaf4" stroke="#3a5cc4" stroke-width=".7"/><rect x="7.6" y="6.4" width="3.8" height="5" rx="1.2" fill="#f2a82a" stroke="#b87818" stroke-width=".4"/><rect x="8.9" y="7.6" width="1.2" height="2.5" fill="#fbe0a0"/></svg>
<div class="t" style="left:24.50px;top:91.20px;font-size:8.7px;color:#3c3b37;">org.adempiere.webstore-feature<span style="color:#a8915c;font-size:9.15px"> [development]</span></div>
<svg class="a" style="left:4.2px;top:108.05px" width="4" height="5" viewBox="0 0 4 5"><path d="M0.5 0.4 L2.6 2.2 L0.5 4.1" stroke="#3a3a3a" stroke-width="1.15" fill="none"/></svg>
<svg class="a" style="left:11.5px;top:105.65px" width="12" height="12" viewBox="0 0 12 12"><path d="M2 2.5 L5 2.5 L6 3.4 L10.8 3.4 L10.8 9.6 L2 9.6Z" fill="#9fb4e8" stroke="#5a6ab8" stroke-width=".6"/><path d="M5 6 L11 5.6 L10.4 9.8 L5 9.8Z" fill="#8cc0f2" stroke="#3a5cc4" stroke-width=".6"/><path d="M3.3 1.2 Q6 1.2 6 3.6 L6 4.6 Q7 5.6 6.6 7.6 Q6.4 10.6 3.3 10.6 Q0.2 10.6 0.2 7.6 Q0 5.6 1 4.6 L1 3.6 Q1 1.2 3.3 1.2Z" fill="#f1c450" stroke="#c09030" stroke-width=".5"/><path d="M9.6 0.3 L9.6 3.6 Q9.6 4.8 8.4 4.8" stroke="#3f78c8" stroke-width="1.1" fill="none"/><rect x="7.6" y="6.4" width="3.8" height="5" rx="1.2" fill="#f2a82a" stroke="#b87818" stroke-width=".4"/><rect x="8.9" y="7.6" width="1.2" height="2.5" fill="#fbe0a0"/></svg>
<div class="t" style="left:24.50px;top:105.43px;font-size:8.7px;color:#3c3b37;">org.apache.ecs<span style="color:#a8915c;font-size:9.15px"> [development]</span></div>
<svg class="a" style="left:4.2px;top:122.28px" width="4" height="5" viewBox="0 0 4 5"><path d="M0.5 0.4 L2.6 2.2 L0.5 4.1" stroke="#3a3a3a" stroke-width="1.15" fill="none"/></svg>
<svg class="a" style="left:11.5px;top:119.88px" width="12" height="12" viewBox="0 0 12 12"><path d="M2 2.5 L5 2.5 L6 3.4 L10.8 3.4 L10.8 9.6 L2 9.6Z" fill="#9fb4e8" stroke="#5a6ab8" stroke-width=".6"/><path d="M5 6 L11 5.6 L10.4 9.8 L5 9.8Z" fill="#8cc0f2" stroke="#3a5cc4" stroke-width=".6"/><path d="M3.3 1.2 Q6 1.2 6 3.6 L6 4.6 Q7 5.6 6.6 7.6 Q6.4 10.6 3.3 10.6 Q0.2 10.6 0.2 7.6 Q0 5.6 1 4.6 L1 3.6 Q1 1.2 3.3 1.2Z" fill="#f1c450" stroke="#c09030" stroke-width=".5"/><path d="M9.6 0.3 L9.6 3.6 Q9.6 4.8 8.4 4.8" stroke="#3f78c8" stroke-width="1.1" fill="none"/><rect x="7.6" y="6.4" width="3.8" height="5" rx="1.2" fill="#f2a82a" stroke="#b87818" stroke-width=".4"/><rect x="8.9" y="7.6" width="1.2" height="2.5" fill="#fbe0a0"/></svg>
<div class="t" style="left:24.50px;top:119.67px;font-size:8.7px;color:#3c3b37;">org.compiere.db.oracle.provider<span style="color:#a8915c;font-size:9.15px"> [development]</span></div>
<svg class="a" style="left:4.2px;top:136.52px" width="4" height="5" viewBox="0 0 4 5"><path d="M0.5 0.4 L2.6 2.2 L0.5 4.1" stroke="#3a3a3a" stroke-width="1.15" fill="none"/></svg>
<svg class="a" style="left:11.5px;top:134.12px" width="12" height="12" viewBox="0 0 12 12"><path d="M2 2.5 L5 2.5 L6 3.4 L10.8 3.4 L10.8 9.6 L2 9.6Z" fill="#9fb4e8" stroke="#5a6ab8" stroke-width=".6"/><path d="M5 6 L11 5.6 L10.4 9.8 L5 9.8Z" fill="#8cc0f2" stroke="#3a5cc4" stroke-width=".6"/><path d="M3.3 1.2 Q6 1.2 6 3.6 L6 4.6 Q7 5.6 6.6 7.6 Q6.4 10.6 3.3 10.6 Q0.2 10.6 0.2 7.6 Q0 5.6 1 4.6 L1 3.6 Q1 1.2 3.3 1.2Z" fill="#f1c450" stroke="#c09030" stroke-width=".5"/><path d="M9.6 0.3 L9.6 3.6 Q9.6 4.8 8.4 4.8" stroke="#3f78c8" stroke-width="1.1" fill="none"/><rect x="7.6" y="6.4" width="3.8" height="5" rx="1.2" fill="#f2a82a" stroke="#b87818" stroke-width=".4"/><rect x="8.9" y="7.6" width="1.2" height="2.5" fill="#fbe0a0"/></svg>
<div class="t" style="left:24.50px;top:133.90px;font-size:8.7px;color:#3c3b37;">org.compiere.db.postgresql.provider<span style="color:#a8915c;font-size:9.15px"> [development]</span></div>
<svg class="a" style="left:4.2px;top:150.75px" width="4" height="5" viewBox="0 0 4 5"><path d="M0.5 0.4 L2.6 2.2 L0.5 4.1" stroke="#3a3a3a" stroke-width="1.15" fill="none"/></svg>
<svg class="a" style="left:11.5px;top:148.35px" width="12" height="12" viewBox="0 0 12 12"><path d="M0.6 2.2 L4 2.2 L5 3.2 L10.8 3.2 L10.8 9.6 L0.6 9.6Z" fill="#8a9ee0" stroke="#4f5fb8" stroke-width=".7"/><rect x="2.2" y="0.8" width="6.8" height="5" fill="#fbe3a0" stroke="#d9b460" stroke-width=".5"/><path d="M1.6 6.2 L11 5.4 L10.2 9.8 L0.8 9.8Z" fill="#9ccaf4" stroke="#3a5cc4" stroke-width=".7"/><rect x="7.6" y="6.4" width="3.8" height="5" rx="1.2" fill="#f2a82a" stroke="#b87818" stroke-width=".4"/><rect x="8.9" y="7.6" width="1.2" height="2.5" fill="#fbe0a0"/></svg>
<div class="t" style="left:24.50px;top:148.14px;font-size:8.7px;color:#3c3b37;">org.compiere.db.provider-feature<span style="color:#a8915c;font-size:9.15px"> [development]</span></div>
<svg class="a" style="left:3.2px;top:165.58px" width="5" height="4" viewBox="0 0 5 4"><path d="M0.4 0.5 L2.3 2.6 L4.2 0.5" stroke="#3a3a3a" stroke-width="1.15" fill="none"/></svg>
<svg class="a" style="left:11.5px;top:162.58px" width="12" height="12" viewBox="0 0 12 12"><path d="M2 2.5 L5 2.5 L6 3.4 L10.8 3.4 L10.8 9.6 L2 9.6Z" fill="#9fb4e8" stroke="#5a6ab8" stroke-width=".6"/><path d="M5 6 L11 5.6 L10.4 9.8 L5 9.8Z" fill="#8cc0f2" stroke="#3a5cc4" stroke-width=".6"/><path d="M3.3 1.2 Q6 1.2 6 3.6 L6 4.6 Q7 5.6 6.6 7.6 Q6.4 10.6 3.3 10.6 Q0.2 10.6 0.2 7.6 Q0 5.6 1 4.6 L1 3.6 Q1 1.2 3.3 1.2Z" fill="#f1c450" stroke="#c09030" stroke-width=".5"/><path d="M9.6 0.3 L9.6 3.6 Q9.6 4.8 8.4 4.8" stroke="#3f78c8" stroke-width="1.1" fill="none"/></svg>
<div class="t" style="left:24.50px;top:162.37px;font-size:8.7px;color:#3c3b37;">org.evenos.callouts</div>
<svg class="a" style="left:13.7px;top:179.22px" width="4" height="5" viewBox="0 0 4 5"><path d="M0.5 0.4 L2.6 2.2 L0.5 4.1" stroke="#3a3a3a" stroke-width="1.15" fill="none"/></svg>
<svg class="a" style="left:21.0px;top:176.82px" width="13" height="11" viewBox="0 0 13 11"><rect x="0.5" y="3" width="8" height="2" fill="#4a7ab8"/><rect x="0.5" y="5.5" width="8" height="2" fill="#4a9a48"/><rect x="0.5" y="8" width="8" height="2" fill="#c85a3a"/><path d="M8.5 1 L10 0.8 L12.5 10 L10.5 10Z" fill="#e9b848" stroke="#a87a20" stroke-width=".5"/></svg>
<div class="t" style="left:33.90px;top:176.61px;font-size:8.7px;color:#3c3b37;">JRE System Library<span style="color:#a8915c;font-size:9.15px"> [JavaSE-1.6]</span></div>
<svg class="a" style="left:12.7px;top:194.06px" width="5" height="4" viewBox="0 0 5 4"><path d="M0.4 0.5 L2.3 2.6 L4.2 0.5" stroke="#3a3a3a" stroke-width="1.15" fill="none"/></svg>
<svg class="a" style="left:21.5px;top:191.06px" width="12" height="11" viewBox="0 0 12 11"><path d="M0.5 1.5 L4 1.5 L5 2.5 L10 2.5 L10 9.5 L0.5 9.5Z" fill="#e8b64c" stroke="#b5842a" stroke-width=".6"/><path d="M1.5 4.5 L11.5 4.5 L10 9.5 L0.5 9.5Z" fill="#f6d88c" stroke="#c0923a" stroke-width=".6"/><path d="M6 1 L6 5 M8 1 L8 5 M5 2 L9.5 2 M5 3.8 L9.5 3.8" stroke="#9a6a2a" stroke-width=".6"/></svg>
<div class="t" style="left:33.90px;top:190.84px;font-size:8.7px;color:#3c3b37;">src</div>
<svg class="a" style="left:22.2px;top:208.29px" width="5" height="4" viewBox="0 0 5 4"><path d="M0.4 0.5 L2.3 2.6 L4.2 0.5" stroke="#3a3a3a" stroke-width="1.15" fill="none"/></svg>
<svg class="a" style="left:31.5px;top:205.29px" width="11" height="11" viewBox="0 0 11 11"><rect x="1" y="1" width="8.5" height="8.5" fill="#e9c48a" stroke="#a8703a" stroke-width=".7"/><path d="M1 4 L9.5 4 M1 6.6 L9.5 6.6 M4 1 L4 9.5 M6.6 1 L6.6 9.5" stroke="#8a4a22" stroke-width=".8"/></svg>
<div class="t" style="left:43.50px;top:205.08px;font-size:8.7px;color:#3c3b37;">org.evenos.callout</div>
<svg class="a" style="left:32.7px;top:221.93px" width="4" height="5" viewBox="0 0 4 5"><path d="M0.5 0.4 L2.6 2.2 L0.5 4.1" stroke="#3a3a3a" stroke-width="1.15" fill="none"/></svg>
<svg class="a" style="left:41.5px;top:219.52px" width="10" height="11" viewBox="0 0 10 11"><path d="M0.6 0.6 L6.2 0.6 L8.6 3 L8.6 10 L0.6 10Z" fill="#fbfaf5" stroke="#c7a54a" stroke-width=".9"/><path d="M5.3 3 L5.3 7.2 Q5.3 8.6 3.8 8.6 Q2.6 8.6 2.4 7.6" stroke="#3f6fb8" stroke-width="1.2" fill="none"/></svg>
<div class="t" style="left:53.00px;top:219.31px;font-size:8.7px;color:#3c3b37;">CalloutFactory.java</div>
<div class="a" style="left:38px;top:232.56px;width:200px;height:13.4px;background:linear-gradient(#dbe6f4,#b5cbe8);border:1px solid #a9c0e0;border-right:none;border-radius:3px 0 0 3px"></div>
<svg class="a" style="left:32.7px;top:236.16px" width="4" height="5" viewBox="0 0 4 5"><path d="M0.5 0.4 L2.6 2.2 L0.5 4.1" stroke="#3a3a3a" stroke-width="1.15" fill="none"/></svg>
<svg class="a" style="left:41.5px;top:233.76px" width="10" height="11" viewBox="0 0 10 11"><path d="M0.6 0.6 L6.2 0.6 L8.6 3 L8.6 10 L0.6 10Z" fill="#fbfaf5" stroke="#c7a54a" stroke-width=".9"/><path d="M5.3 3 L5.3 7.2 Q5.3 8.6 3.8 8.6 Q2.6 8.6 2.4 7.6" stroke="#3f6fb8" stroke-width="1.2" fill="none"/></svg>
<div class="t" style="left:53.00px;top:233.55px;font-size:8.7px;color:#f5f8fc;">CalloutFromFactory.java</div>
<svg class="a" style="left:32.7px;top:250.4px" width="4" height="5" viewBox="0 0 4 5"><path d="M0.5 0.4 L2.6 2.2 L0.5 4.1" stroke="#3a3a3a" stroke-width="1.15" fill="none"/></svg>
<svg class="a" style="left:41.5px;top:248.0px" width="10" height="11" viewBox="0 0 10 11"><path d="M0.6 0.6 L6.2 0.6 L8.6 3 L8.6 10 L0.6 10Z" fill="#fbfaf5" stroke="#c7a54a" stroke-width=".9"/><path d="M5.3 3 L5.3 7.2 Q5.3 8.6 3.8 8.6 Q2.6 8.6 2.4 7.6" stroke="#3f6fb8" stroke-width="1.2" fill="none"/></svg>
<div class="t" style="left:53.00px;top:247.78px;font-size:8.7px;color:#3c3b37;">IColumnCalloutCallout.java</div>
<svg class="a" style="left:32.7px;top:264.63px" width="4" height="5" viewBox="0 0 4 5"><path d="M0.5 0.4 L2.6 2.2 L0.5 4.1" stroke="#3a3a3a" stroke-width="1.15" fill="none"/></svg>
<svg class="a" style="left:41.5px;top:262.23px" width="10" height="11" viewBox="0 0 10 11"><path d="M0.6 0.6 L6.2 0.6 L8.6 3 L8.6 10 L0.6 10Z" fill="#fbfaf5" stroke="#c7a54a" stroke-width=".9"/><path d="M5.3 3 L5.3 7.2 Q5.3 8.6 3.8 8.6 Q2.6 8.6 2.4 7.6" stroke="#3f6fb8" stroke-width="1.2" fill="none"/></svg>
<div class="t" style="left:53.00px;top:262.02px;font-size:8.7px;color:#3c3b37;">JavaCallout.java</div>
<svg class="a" style="left:13.7px;top:278.87px" width="4" height="5" viewBox="0 0 4 5"><path d="M0.5 0.4 L2.6 2.2 L0.5 4.1" stroke="#3a3a3a" stroke-width="1.15" fill="none"/></svg>
<svg class="a" style="left:21.0px;top:276.46px" width="13" height="11" viewBox="0 0 13 11"><rect x="0.5" y="3" width="8" height="2" fill="#4a7ab8"/><rect x="0.5" y="5.5" width="8" height="2" fill="#4a9a48"/><rect x="0.5" y="8" width="8" height="2" fill="#c85a3a"/><path d="M8.5 1 L10 0.8 L12.5 10 L10.5 10Z" fill="#e9b848" stroke="#a87a20" stroke-width=".5"/></svg>
<div class="t" style="left:33.90px;top:276.25px;font-size:8.7px;color:#3c3b37;">Plug-in Dependencies</div>
<svg class="a" style="left:12.7px;top:293.7px" width="5" height="4" viewBox="0 0 5 4"><path d="M0.4 0.5 L2.3 2.6 L4.2 0.5" stroke="#3a3a3a" stroke-width="1.15" fill="none"/></svg>
<svg class="a" style="left:21.5px;top:290.7px" width="12" height="11" viewBox="0 0 12 11"><path d="M0.5 1.5 L4 1.5 L5 2.5 L10 2.5 L10 9.5 L0.5 9.5Z" fill="#e8b64c" stroke="#b5842a" stroke-width=".6"/><path d="M1.5 4.5 L11.5 4.5 L10 9.5 L0.5 9.5Z" fill="#f6d88c" stroke="#c0923a" stroke-width=".6"/></svg>
<div class="t" style="left:33.90px;top:290.49px;font-size:8.7px;color:#3c3b37;">META-INF</div>
<svg class="a" style="left:31.5px;top:304.94px" width="11" height="11" viewBox="0 0 11 11"><path d="M2.6 0.6 L7.5 0.6 L9.6 2.7 L9.6 10 L2.6 10Z" fill="#fbfaf3" stroke="#c7a54a" stroke-width=".8"/><path d="M5 3 L0.5 6 L5 9Z" fill="#4a82d0"/><path d="M6 4 L9.5 6.3 L6 8.6Z" fill="#f0b838"/></svg>
<div class="t" style="left:43.50px;top:304.72px;font-size:8.7px;color:#3c3b37;">MANIFEST.MF</div>
<svg class="a" style="left:12.7px;top:322.17px" width="5" height="4" viewBox="0 0 5 4"><path d="M0.4 0.5 L2.3 2.6 L4.2 0.5" stroke="#3a3a3a" stroke-width="1.15" fill="none"/></svg>
<svg class="a" style="left:21.5px;top:319.17px" width="12" height="11" viewBox="0 0 12 11"><path d="M0.5 1.5 L4 1.5 L5 2.5 L10 2.5 L10 9.5 L0.5 9.5Z" fill="#e8b64c" stroke="#b5842a" stroke-width=".6"/><path d="M1.5 4.5 L11.5 4.5 L10 9.5 L0.5 9.5Z" fill="#f6d88c" stroke="#c0923a" stroke-width=".6"/></svg>
<div class="t" style="left:33.90px;top:318.96px;font-size:8.7px;color:#3c3b37;">OSGI-INF</div>
<svg class="a" style="left:31.5px;top:333.4px" width="10" height="11" viewBox="0 0 10 11"><path d="M0.6 0.6 L6 0.6 L8.6 3.2 L8.6 10 L0.6 10Z" fill="#fbfaf5" stroke="#c7a54a" stroke-width=".8"/><path d="M1.5 8.5 L3.5 6 L5.5 8.5" stroke="#3f6fb8" stroke-width="1.1" fill="none"/><rect x="0.5" y="8.6" width="6" height="1.5" fill="#3f6fb8"/></svg>
<div class="t" style="left:43.50px;top:333.19px;font-size:8.7px;color:#3c3b37;">calloutfactory.xml</div>
<svg class="a" style="left:21.5px;top:347.64px" width="11" height="11" viewBox="0 0 11 11"><path d="M2.6 0.6 L7.5 0.6 L9.6 2.7 L9.6 10 L2.6 10Z" fill="#fbfaf3" stroke="#8a95a8" stroke-width=".8"/><path d="M4 3.5 L8 3.5 M4 5.3 L8 5.3" stroke="#7a8aa8" stroke-width=".8"/><path d="M7 6.5 L7 9.5 M8.6 6.5 L8.6 9.5" stroke="#3f5f98" stroke-width=".9"/><path d="M0.3 10.8 L2.3 6.8 L4.3 10.8Z" fill="#e9b848" stroke="#a87a20" stroke-width=".4"/></svg>
<div class="t" style="left:33.90px;top:347.43px;font-size:8.7px;color:#3c3b37;">build.properties</div>
<svg class="a" style="left:21.5px;top:361.88px" width="11" height="11" viewBox="0 0 11 11"><path d="M2.6 0.6 L7.5 0.6 L9.6 2.7 L9.6 10 L2.6 10Z" fill="#fbfaf3" stroke="#c7a54a" stroke-width=".8"/><path d="M5 3 L0.5 6 L5 9Z" fill="#4a82d0"/><path d="M6 4 L9.5 6.3 L6 8.6Z" fill="#f0b838"/></svg>
<div class="t" style="left:33.90px;top:361.66px;font-size:8.7px;color:#3c3b37;">plugin.xml</div>
<svg class="a" style="left:4.2px;top:378.51px" width="4" height="5" viewBox="0 0 4 5"><path d="M0.5 0.4 L2.6 2.2 L0.5 4.1" stroke="#3a3a3a" stroke-width="1.15" fill="none"/></svg>
<svg class="a" style="left:11.5px;top:376.11px" width="12" height="12" viewBox="0 0 12 12"><path d="M2 2.5 L5 2.5 L6 3.4 L10.8 3.4 L10.8 9.6 L2 9.6Z" fill="#9fb4e8" stroke="#5a6ab8" stroke-width=".6"/><path d="M5 6 L11 5.6 L10.4 9.8 L5 9.8Z" fill="#8cc0f2" stroke="#3a5cc4" stroke-width=".6"/><path d="M3.3 1.2 Q6 1.2 6 3.6 L6 4.6 Q7 5.6 6.6 7.6 Q6.4 10.6 3.3 10.6 Q0.2 10.6 0.2 7.6 Q0 5.6 1 4.6 L1 3.6 Q1 1.2 3.3 1.2Z" fill="#f1c450" stroke="#c09030" stroke-width=".5"/><path d="M9.6 0.3 L9.6 3.6 Q9.6 4.8 8.4 4.8" stroke="#3f78c8" stroke-width="1.1" fill="none"/></svg>
<div class="t" style="left:24.50px;top:375.90px;font-size:8.7px;color:#3c3b37;">org.evenos.icons</div>
<svg class="a" style="left:4.2px;top:392.74px" width="4" height="5" viewBox="0 0 4 5"><path d="M0.5 0.4 L2.6 2.2 L0.5 4.1" stroke="#3a3a3a" stroke-width="1.15" fill="none"/></svg>
<svg class="a" style="left:11.5px;top:390.34px" width="12" height="12" viewBox="0 0 12 12"><path d="M2 2.5 L5 2.5 L6 3.4 L10.8 3.4 L10.8 9.6 L2 9.6Z" fill="#9fb4e8" stroke="#5a6ab8" stroke-width=".6"/><path d="M5 6 L11 5.6 L10.4 9.8 L5 9.8Z" fill="#8cc0f2" stroke="#3a5cc4" stroke-width=".6"/><path d="M3.3 1.2 Q6 1.2 6 3.6 L6 4.6 Q7 5.6 6.6 7.6 Q6.4 10.6 3.3 10.6 Q0.2 10.6 0.2 7.6 Q0 5.6 1 4.6 L1 3.6 Q1 1.2 3.3 1.2Z" fill="#f1c450" stroke="#c09030" stroke-width=".5"/><path d="M9.6 0.3 L9.6 3.6 Q9.6 4.8 8.4 4.8" stroke="#3f78c8" stroke-width="1.1" fill="none"/><rect x="7.6" y="6.4" width="3.8" height="5" rx="1.2" fill="#f2a82a" stroke="#b87818" stroke-width=".4"/><rect x="8.9" y="7.6" width="1.2" height="2.5" fill="#fbe0a0"/></svg>
<div class="t" style="left:24.50px;top:390.13px;font-size:8.7px;color:#3c3b37;">org.evenos.logvocatus<span style="color:#a8915c;font-size:9.15px"> [default ↑1]</span></div>
<svg class="a" style="left:4.2px;top:406.98px" width="4" height="5" viewBox="0 0 4 5"><path d="M0.5 0.4 L2.6 2.2 L0.5 4.1" stroke="#3a3a3a" stroke-width="1.15" fill="none"/></svg>
<svg class="a" style="left:11.5px;top:404.58px" width="12" height="12" viewBox="0 0 12 12"><path d="M2 2.5 L5 2.5 L6 3.4 L10.8 3.4 L10.8 9.6 L2 9.6Z" fill="#9fb4e8" stroke="#5a6ab8" stroke-width=".6"/><path d="M5 6 L11 5.6 L10.4 9.8 L5 9.8Z" fill="#8cc0f2" stroke="#3a5cc4" stroke-width=".6"/><path d="M3.3 1.2 Q6 1.2 6 3.6 L6 4.6 Q7 5.6 6.6 7.6 Q6.4 10.6 3.3 10.6 Q0.2 10.6 0.2 7.6 Q0 5.6 1 4.6 L1 3.6 Q1 1.2 3.3 1.2Z" fill="#f1c450" stroke="#c09030" stroke-width=".5"/><path d="M9.6 0.3 L9.6 3.6 Q9.6 4.8 8.4 4.8" stroke="#3f78c8" stroke-width="1.1" fill="none"/><rect x="7.6" y="6.4" width="3.8" height="5" rx="1.2" fill="#f2a82a" stroke="#b87818" stroke-width=".4"/><rect x="8.9" y="7.6" width="1.2" height="2.5" fill="#fbe0a0"/></svg>
<div class="t" style="left:24.50px;top:404.37px;font-size:8.7px;color:#3c3b37;">org.evenos.pricelist<span style="color:#a8915c;font-size:9.15px"> [default]</span></div>
<svg class="a" style="left:4.2px;top:421.21px" width="4" height="5" viewBox="0 0 4 5"><path d="M0.5 0.4 L2.6 2.2 L0.5 4.1" stroke="#3a3a3a" stroke-width="1.15" fill="none"/></svg>
<svg class="a" style="left:11.5px;top:418.81px" width="12" height="12" viewBox="0 0 12 12"><path d="M0.6 2.2 L4 2.2 L5 3.2 L10.8 3.2 L10.8 9.6 L0.6 9.6Z" fill="#8a9ee0" stroke="#4f5fb8" stroke-width=".7"/><rect x="2.2" y="0.8" width="6.8" height="5" fill="#fbe3a0" stroke="#d9b460" stroke-width=".5"/><path d="M1.6 6.2 L11 5.4 L10.2 9.8 L0.8 9.8Z" fill="#9ccaf4" stroke="#3a5cc4" stroke-width=".7"/><rect x="7.6" y="6.4" width="3.8" height="5" rx="1.2" fill="#f2a82a" stroke="#b87818" stroke-width=".4"/><rect x="8.9" y="7.6" width="1.2" height="2.5" fill="#fbe0a0"/></svg>
<div class="t" style="left:24.50px;top:418.60px;font-size:8.7px;color:#3c3b37;">org.evenos.pricelistfeature<span style="color:#a8915c;font-size:9.15px"> [default]</span></div>
<svg class="a" style="left:4.2px;top:435.45px" width="4" height="5" viewBox="0 0 4 5"><path d="M0.5 0.4 L2.6 2.2 L0.5 4.1" stroke="#3a3a3a" stroke-width="1.15" fill="none"/></svg>
<svg class="a" style="left:11.5px;top:433.05px" width="12" height="12" viewBox="0 0 12 12"><path d="M0.6 2.2 L4 2.2 L5 3.2 L10.8 3.2 L10.8 9.6 L0.6 9.6Z" fill="#8a9ee0" stroke="#4f5fb8" stroke-width=".7"/><rect x="2.2" y="0.8" width="6.8" height="5" fill="#fbe3a0" stroke="#d9b460" stroke-width=".5"/><path d="M1.6 6.2 L11 5.4 L10.2 9.8 L0.8 9.8Z" fill="#9ccaf4" stroke="#3a5cc4" stroke-width=".7"/><rect x="7.6" y="6.4" width="3.8" height="5" rx="1.2" fill="#f2a82a" stroke="#b87818" stroke-width=".4"/><rect x="8.9" y="7.6" width="1.2" height="2.5" fill="#fbe0a0"/></svg>
<div class="t" style="left:24.50px;top:432.84px;font-size:8.7px;color:#3c3b37;">org.idempiere.ui.swing.product.feature<span style="color:#a8915c;font-size:9.15px"> [default]</span></div>
</div>
<div class="a" style="left:262px;top:119px;width:12.5px;height:436px;background:#e3e2e0"></div>
<svg class="a" style="left:264px;top:120px" width="9" height="6" viewBox="0 0 9 6"><path d="M1 4.5 L4.5 1.2 L8 4.5" stroke="#333" stroke-width="1.3" fill="none"/></svg>
<div class="a" style="left:264px;top:127px;width:9px;height:412px;background:linear-gradient(90deg,#aeadab,#bdbcba 40%,#b4b3b1);border:1px solid #a3a2a0;border-radius:3px"></div>
<svg class="a" style="left:264px;top:541px" width="9" height="6" viewBox="0 0 9 6"><path d="M1.3 4.5 L4.5 1.4 L7.7 4.5" stroke="#333" stroke-width="1.15" fill="none"/></svg>
<svg class="a" style="left:264px;top:549.5px" width="9" height="6" viewBox="0 0 9 6"><path d="M1.3 1.2 L4.5 4.3 L7.7 1.2" stroke="#333" stroke-width="1.15" fill="none"/></svg>
<div class="a" style="left:34px;top:555px;width:241px;height:14px;background:#e3e2e0"></div>
<svg class="a" style="left:34px;top:557px" width="6" height="9" viewBox="0 0 6 9"><path d="M4.5 1 L1.2 4.5 L4.5 8" stroke="#777" stroke-width="1" fill="none"/></svg>
<div class="a" style="left:190px;top:557.5px;width:54px;height:8.5px;background:#bcbbb9;border-radius:0 3px 3px 0"></div>
<div class="a" style="left:43px;top:557.5px;width:150px;height:8.5px;background:linear-gradient(#dddcda,#d2d1cf);border:1px solid #8e8d8b;border-radius:3px"></div>
<svg class="a" style="left:248.5px;top:557.5px" width="6" height="9" viewBox="0 0 6 9"><path d="M4.2 1 L1.2 4.2 L4.2 7.4" stroke="#888" stroke-width="1" fill="none"/></svg>
<svg class="a" style="left:255.5px;top:557.5px" width="6" height="9" viewBox="0 0 6 9"><path d="M1.2 1 L4.2 4.2 L1.2 7.4" stroke="#333" stroke-width="1.15" fill="none"/></svg>
<div class="a" style="left:278.5px;top:80.5px;width:692px;height:330px;border:1px solid #adacaa;border-radius:6px 6px 0 0;background:#e3e2e0"></div>
<div class="a" style="left:279.5px;top:98px;width:670px;height:299.2px;background:#fff"></div>
<div class="a" style="left:279.5px;top:97px;width:216px;height:1px;background:#a9a8a6"></div>
<div class="a" style="left:640px;top:97px;width:330px;height:1px;background:#a9a8a6"></div>
<svg class="a" style="left:495px;top:80.5px" width="147" height="18" viewBox="0 0 147 18"><path d="M0.5 17.5 L0.5 4 Q0.5 0.5 4 0.5 L119 0.5 Q125 0.5 130 7 Q137 16.5 144 16.5 L147 16.5 L147 18 L0.5 18Z" fill="#fff"/><path d="M0.5 17 L0.5 4 Q0.5 0.5 4 0.5 L119 0.5 Q125 0.5 130 7 Q137 16.5 144 16.5 L147 16.5" fill="none" stroke="#a9a8a6" stroke-width="1"/></svg>
<div class="a" style="left:386px;top:81px;width:1px;height:16px;background:#bcbbb9"></div>
<svg class="a" style="left:282px;top:84px" width="10" height="11" viewBox="0 0 10 11"><path d="M0.6 0.6 L6.2 0.6 L8.6 3 L8.6 10 L0.6 10Z" fill="#fbfaf5" stroke="#c7a54a" stroke-width=".9"/><path d="M5.3 3 L5.3 7.2 Q5.3 8.6 3.8 8.6 Q2.6 8.6 2.4 7.6" stroke="#3f6fb8" stroke-width="1.2" fill="none"/></svg>
<div class="t" style="left:294.70px;top:84.39px;font-size:8.7px;color:#3c3b37;">CalloutFactory.java</div>
<svg class="a" style="left:389px;top:83.5px" width="11" height="11" viewBox="0 0 11 11"><path d="M2.6 0.6 L7.5 0.6 L9.6 2.7 L9.6 10 L2.6 10Z" fill="#fbfaf3" stroke="#c7a54a" stroke-width=".8"/><path d="M5 3 L0.5 6 L5 9Z" fill="#4a82d0"/><path d="M6 4 L9.5 6.3 L6 8.6Z" fill="#f0b838"/></svg>
<div class="t" style="left:402.70px;top:84.39px;font-size:8.7px;color:#3c3b37;">org.evenos.callouts</div>
<svg class="a" style="left:498.8px;top:84px" width="10" height="11" viewBox="0 0 10 11"><path d="M0.6 0.6 L6.2 0.6 L8.6 3 L8.6 10 L0.6 10Z" fill="#fbfaf5" stroke="#c7a54a" stroke-width=".9"/><path d="M5.3 3 L5.3 7.2 Q5.3 8.6 3.8 8.6 Q2.6 8.6 2.4 7.6" stroke="#3f6fb8" stroke-width="1.2" fill="none"/></svg>
<div class="t" style="left:510.70px;top:84.39px;font-size:8.7px;color:#3c3b37;">CalloutFromFactory.java</div>
<svg class="a" style="left:610px;top:85.8px" width="9" height="9" viewBox="0 0 9 9"><path d="M0.5 1.8 L1.8 0.5 L4.2 2.9 L6.6 0.5 L7.9 1.8 L5.5 4.2 L7.9 6.6 L6.6 7.9 L4.2 5.5 L1.8 7.9 L0.5 6.6 L2.9 4.2Z" fill="#fbfbfb" stroke="#3a3a3a" stroke-width="1.1" stroke-linejoin="round"/></svg>
<div class="a" style="left:947px;top:84.5px;width:7px;height:3.5px;border:1px solid #3a3a3a;border-radius:1px;background:#f4f4f4"></div>
<div class="a" style="left:959px;top:84.5px;width:7.5px;height:7.5px;border:1px solid #3a3a3a;border-top-width:2px;border-radius:1px;background:#fafafa"></div>
<div class="a" style="left:280px;top:98px;width:8px;height:300px;background:#e4e3e1"></div>
<div class="a" style="left:280.5px;top:100px;width:8px;height:11px;background:#8cb1e0;border-top:1px solid #5c8fd6;border-bottom:1px solid #5c8fd6"></div>
<div class="a" style="left:305px;top:98px;width:1px;height:300px;background:#efefef"></div>
<div class="a" style="left:306px;top:261px;width:643px;height:11px;background:#e8f2fe"></div>
<div class="t mono" style="left:293.56px;top:101.49px;font-size:9.06px;color:#8a8a8a;">1</div>
<div class="t mono" style="left:307.50px;top:101.49px;font-size:9.06px;color:#000;"><b class="k">package</b> org.evenos.callout;</div>
<div class="t mono" style="left:293.56px;top:112.94px;font-size:9.06px;color:#8a8a8a;">2</div>
<div class="t mono" style="left:293.56px;top:124.39px;font-size:9.06px;color:#8a8a8a;">3</div>
<div class="t mono" style="left:307.50px;top:124.39px;font-size:9.06px;color:#000;"><b class="k">import</b> java.util.Properties;</div>
<div class="t mono" style="left:293.56px;top:135.84px;font-size:9.06px;color:#8a8a8a;">8</div>
<div class="t mono" style="left:293.56px;top:147.29px;font-size:9.06px;color:#8a8a8a;">9</div>
<div class="t mono" style="left:307.50px;top:147.29px;font-size:9.06px;color:#000;"><b class="k">public</b> <b class="k">class</b> CalloutFromFactory <b class="k">implements</b> IColumnCallout{</div>
<div class="t mono" style="left:288.12px;top:158.74px;font-size:9.06px;color:#8a8a8a;">10</div>
<div class="t mono" style="left:288.12px;top:170.19px;font-size:9.06px;color:#8a8a8a;">11</div>
<div class="t mono" style="left:307.50px;top:170.19px;font-size:9.06px;color:#000;">    <span class="an">@Override</span></div>
<div class="t mono" style="left:288.12px;top:181.64px;font-size:9.06px;color:#8a8a8a;">12</div>
<div class="t mono" style="left:307.50px;top:181.64px;font-size:9.06px;color:#000;">    <b class="k">public</b> String start(Properties ctx, <b class="k">int</b> WindowNo, GridTab mTab,</div>
<div class="t mono" style="left:288.12px;top:193.09px;font-size:9.06px;color:#8a8a8a;">13</div>
<div class="t mono" style="left:307.50px;top:193.09px;font-size:9.06px;color:#000;">            GridField mField, Object value, Object oldValue) {</div>
<div class="t mono" style="left:288.12px;top:204.54px;font-size:9.06px;color:#8a8a8a;">14</div>
<div class="t mono" style="left:307.50px;top:204.54px;font-size:9.06px;color:#000;">        System.<i class="f">out</i>.println(ctx +<span class="s">" - "</span>+ WindowNo+<span class="s">" - "</span>+mTab+<span class="s">" - "</span>+mField+<span class="s">" - "</span>+value+<span class="s">" - "</span>+oldValue);</div>
<div class="t mono" style="left:288.12px;top:215.99px;font-size:9.06px;color:#8a8a8a;">15</div>
<div class="t mono" style="left:307.50px;top:215.99px;font-size:9.06px;color:#000;">        <b class="k">return</b> <b class="k">null</b>;</div>
<div class="t mono" style="left:288.12px;top:227.44px;font-size:9.06px;color:#8a8a8a;">16</div>
<div class="t mono" style="left:307.50px;top:227.44px;font-size:9.06px;color:#000;">    }</div>
<div class="t mono" style="left:288.12px;top:238.89px;font-size:9.06px;color:#8a8a8a;">17</div>
<div class="t mono" style="left:288.12px;top:250.34px;font-size:9.06px;color:#8a8a8a;">18</div>
<div class="t mono" style="left:307.50px;top:250.34px;font-size:9.06px;color:#000;">}</div>
<div class="t mono" style="left:288.12px;top:261.79px;font-size:9.06px;color:#8a8a8a;">19</div>
<svg class="a" style="left:299.5px;top:124.5px" width="6" height="6" viewBox="0 0 6 6"><circle cx="3" cy="3" r="2.7" fill="#cfdced" stroke="#9db3cf" stroke-width=".5"/><path d="M1.5 3 L4.5 3 M3 1.5 L3 4.5" stroke="#3a5a8a" stroke-width=".9"/></svg>
<svg class="a" style="left:299.5px;top:171px" width="6" height="6" viewBox="0 0 6 6"><circle cx="3" cy="3" r="2.7" fill="#dfe7f0" stroke="#9db3cf" stroke-width=".5"/><path d="M1.5 3 L4.5 3" stroke="#7a90b0" stroke-width=".9"/></svg>
<svg class="a" style="left:281px;top:183.3px" width="7" height="5" viewBox="0 0 7 5"><path d="M0.6 3.6 L3.3 0.8 L6 3.6Z" fill="#e4dcf6" stroke="#7a4ad0" stroke-width=".9"/></svg>
<div class="a" style="left:949px;top:98px;width:20px;height:300px;background:#e3e2e0"></div>
<svg class="a" style="left:951.5px;top:100.5px" width="8" height="6" viewBox="0 0 8 6"><path d="M1 4.2 L4 1.2 L7 4.2" stroke="#8a8a8a" stroke-width="1" fill="none"/></svg>
<div class="a" style="left:950.5px;top:108.5px;width:8.5px;height:271px;background:linear-gradient(90deg,#d6d5d3,#e6e5e3,#d6d5d3);border:1px solid #8e8d8b;border-radius:3px"></div>
<svg class="a" style="left:951.5px;top:383px" width="8" height="6" viewBox="0 0 8 6"><path d="M1 4.2 L4 1.2 L7 4.2" stroke="#8a8a8a" stroke-width="1" fill="none"/></svg>
<svg class="a" style="left:951.5px;top:391.5px" width="8" height="6" viewBox="0 0 8 6"><path d="M1 1.2 L4 4.2 L7 1.2" stroke="#8a8a8a" stroke-width="1" fill="none"/></svg>
<div class="a" style="left:279.5px;top:397px;width:670px;height:12px;background:#e3e2e0"></div>
<svg class="a" style="left:307px;top:399.5px" width="6" height="9" viewBox="0 0 6 9"><path d="M4.5 1 L1.5 4.2 L4.5 7.4" stroke="#7a7a7a" stroke-width="1" fill="none"/></svg>
<div class="a" style="left:315.5px;top:398.3px;width:615px;height:8.8px;background:linear-gradient(#d3d2d0,#e4e3e1,#d3d2d0);border:1px solid #8e8d8b;border-radius:3px"></div>
<svg class="a" style="left:934px;top:399px" width="7" height="9" viewBox="0 0 7 9"><path d="M5 1 L1.5 4.5 L5 8" stroke="#7a7a7a" stroke-width="1" fill="none"/></svg>
<svg class="a" style="left:942px;top:399px" width="7" height="9" viewBox="0 0 7 9"><path d="M1.5 1 L5 4.5 L1.5 8" stroke="#7a7a7a" stroke-width="1" fill="none"/></svg>
<div class="a" style="left:279px;top:98px;width:1px;height:312px;background:#fbfbfb"></div>
<div class="a" style="left:969px;top:98px;width:1px;height:312px;background:#fbfbfb"></div>
<div class="a" style="left:279.5px;top:409px;width:690px;height:1px;background:#fbfbfb"></div>
<div class="a" style="left:278.5px;top:413px;width:692px;height:157px;border:1px solid #adacaa;border-radius:6px 6px 0 0;background:#e3e2e0"></div>
<div class="a" style="left:328.9px;top:414px;width:1px;height:17px;background:#bcbbb9"></div>
<div class="a" style="left:387.8px;top:414px;width:1px;height:17px;background:#bcbbb9"></div>
<div class="a" style="left:434.8px;top:414px;width:1px;height:17px;background:#bcbbb9"></div>
<div class="a" style="left:536px;top:414px;width:1px;height:17px;background:#bcbbb9"></div>
<svg class="a" style="left:586px;top:413.5px" width="86" height="19" viewBox="0 0 86 19"><defs><linearGradient id="ctab" x1="0" y1="0" x2="0" y2="1"><stop offset="0" stop-color="#dae7f7"/><stop offset="1" stop-color="#8db4e6"/></linearGradient></defs><path d="M0.5 19 L0.5 4.5 Q0.5 0.5 4.5 0.5 L56 0.5 Q62 0.5 68 8 Q75 17.5 82 17.5 L86 17.5 L86 19Z" fill="url(#ctab)"/><path d="M56 0.5 Q62 0.5 68 8 Q75 17.5 82 17.5 L86 17.5" fill="none" stroke="#b0afad" stroke-width=".8"/></svg>
<div class="a" style="left:279.5px;top:431px;width:691px;height:2px;background:#8db4e6"></div>
<svg class="a" style="left:281px;top:417px" width="10" height="12" viewBox="0 0 10 12"><rect x=".5" y=".5" width="9" height="11" fill="#f6f6f6" stroke="#b0b0b0" stroke-width=".6"/><circle cx="5" cy="4" r="2" fill="#e03a3a"/><rect x="3" y="7.5" width="4" height="3" fill="#f0b030"/></svg>
<div class="t" style="left:294.60px;top:417.19px;font-size:8.7px;color:#3c3b37;">Markers</div>
<svg class="a" style="left:332px;top:418px" width="10" height="10" viewBox="0 0 10 10"><rect x=".5" y=".5" width="9" height="9" fill="#fff" stroke="#6a8ab8" stroke-width=".8"/><rect x=".8" y=".8" width="8.4" height="2" fill="#a8bfdf"/><path d="M3.5 3 L3.5 9.5" stroke="#6a8ab8" stroke-width=".6"/></svg>
<div class="t" style="left:344.70px;top:417.19px;font-size:8.7px;color:#3c3b37;">Properties</div>
<svg class="a" style="left:391px;top:417px" width="10" height="12" viewBox="0 0 10 12"><circle cx="3" cy="3" r="1.6" fill="#4a7ac8"/><circle cx="7" cy="3" r="1.6" fill="#4a7ac8"/><path d="M1 11 L3 5 L5 11 M5 11 L7 5 L9 11" stroke="#3a62a8" stroke-width="1.2" fill="none"/><rect x="2" y="7" width="6" height="2" fill="#e8b840"/></svg>
<div class="t" style="left:403.60px;top:417.19px;font-size:8.7px;color:#3c3b37;">Servers</div>
<svg class="a" style="left:437px;top:416.5px" width="11" height="12" viewBox="0 0 11 12"><rect x=".5" y="1" width="10" height="10" fill="#8cc048" stroke="#5a8a2a" stroke-width=".6"/><path d="M3 1 L3 11 M7 1 L7 11" stroke="#3a7a2a" stroke-width=".8"/><ellipse cx="8" cy="4" rx="2.5" ry="1.3" fill="#e8c040"/><ellipse cx="8" cy="8" rx="2.5" ry="1.3" fill="#e8c040"/></svg>
<div class="t" style="left:450.70px;top:417.19px;font-size:8.7px;color:#3c3b37;">Data Source Explorer</div>
<svg class="a" style="left:539px;top:417px" width="10" height="12" viewBox="0 0 10 12"><path d="M.5 .5 L6.5 .5 L9.5 3.5 L9.5 11.5 L.5 11.5Z" fill="#f8f8f8" stroke="#9aa4b8" stroke-width=".6"/><rect x="2" y="6" width="6" height="4" fill="#e05a6a"/><rect x="2" y="4" width="6" height="1.5" fill="#6a9ad8"/></svg>
<div class="t" style="left:551.30px;top:417.19px;font-size:8.7px;color:#3c3b37;">Snippets</div>
<svg class="a" style="left:590px;top:416.5px" width="10" height="12" viewBox="0 0 10 12"><rect x=".5" y=".5" width="9" height="8" rx=".5" fill="#dbe7f5" stroke="#3f6fb0" stroke-width="1"/><rect x="2" y="2" width="6" height="5" fill="#b5c8e2"/><rect x="3" y="9.5" width="4" height="1.5" fill="#3f6fb0"/><rect x="1.5" y="10.5" width="7" height="1" fill="#3f6fb0"/></svg>
<div class="t" style="left:603.00px;top:417.19px;font-size:8.7px;color:#3c3b37;">Console</div>
<svg class="a" style="left:638.5px;top:417.8px" width="9" height="9" viewBox="0 0 9 9"><path d="M0.5 1.8 L1.8 0.5 L4.2 2.9 L6.6 0.5 L7.9 1.8 L5.5 4.2 L7.9 6.6 L6.6 7.9 L4.2 5.5 L1.8 7.9 L0.5 6.6 L2.9 4.2Z" fill="#fbfbfb" stroke="#2a2a2a" stroke-width="1.25" stroke-linejoin="round"/></svg>
<svg class="a" style="left:665px;top:416.5px" width="11" height="12" viewBox="0 0 11 12"><rect x="3.5" y=".5" width="6" height="8" rx="1" fill="#f0b030" stroke="#b88018" stroke-width=".6"/><rect x=".5" y="3.5" width="6" height="8" rx="1" fill="#e8eef6" stroke="#8898b0" stroke-width=".6"/></svg>
<div class="t" style="left:677.30px;top:417.19px;font-size:8.7px;color:#3c3b37;">History</div>
<div class="a" style="left:707px;top:414px;width:1px;height:17px;background:#bcbbb9"></div>
<svg class="a" style="left:709.5px;top:416.5px" width="11" height="12" viewBox="0 0 11 12"><g stroke="#1f4a4a" stroke-width=".9"><path d="M0.5 3.5 L10.5 9 M0.5 9 L10.5 3.5 M5.5 0.5 L5.5 12 M0 6.3 L11 6.3"/></g><ellipse cx="5.5" cy="6.3" rx="3.4" ry="3.6" fill="#3f8a6a" stroke="#1f4a4a" stroke-width=".7"/><ellipse cx="5.8" cy="6.2" rx="1.8" ry="1.6" fill="#8fd070"/></svg>
<div class="t" style="left:722.50px;top:417.19px;font-size:8.7px;color:#3c3b37;">Debug</div>
<div class="a" style="left:750px;top:414px;width:1px;height:17px;background:#bcbbb9"></div>
<svg class="a" style="left:753px;top:416.5px" width="12" height="12" viewBox="0 0 12 12"><path d="M1 11.5 L3 8 L9 2 L11.5 4.5 L5.5 10.5Z" fill="#f0c75a" stroke="#b5882f" stroke-width=".7"/><path d="M7.5 3.5 L10 6" stroke="#9a9a9a" stroke-width="1.6"/><path d="M1 11.5 L2.5 9.5 L3.5 10.5Z" fill="#777"/></svg>
<div class="t" style="left:767.00px;top:417.19px;font-size:8.7px;color:#3c3b37;">Search</div>
<div class="a" style="left:795px;top:414px;width:1px;height:17px;background:#bcbbb9"></div>
<svg class="a" style="left:798.5px;top:416.5px" width="12" height="12" viewBox="0 0 12 12"><path d="M2 11 L2 2 M0 4 L2 1 L4 4" stroke="#2a5aa8" stroke-width="1.1" fill="none"/><path d="M6 11 L6 5 L9 1.5 M7 1 L9.5 1 L9.5 4" stroke="#2a5aa8" stroke-width="1.1" fill="none"/><path d="M6 7 L3 3" stroke="#2a5aa8" stroke-width="1.1"/></svg>
<div class="t" style="left:812.30px;top:417.19px;font-size:8.7px;color:#3c3b37;">Mercurial Merge</div>
<div class="a" style="left:877.6px;top:414px;width:1px;height:17px;background:#bcbbb9"></div>
<div class="a" style="left:947px;top:417.5px;width:7px;height:3.5px;border:1px solid #3a3a3a;border-radius:1px;background:#f4f4f4"></div>
<div class="a" style="left:959px;top:417.5px;width:7.5px;height:7.5px;border:1px solid #3a3a3a;border-top-width:2px;border-radius:1px;background:#fafafa"></div>
<div class="a" style="left:279.5px;top:433px;width:1px;height:136px;background:#8db4e6"></div>
<div class="a" style="left:969px;top:433px;width:1px;height:136px;background:#8db4e6"></div>
<div class="a" style="left:279.5px;top:568px;width:690.5px;height:1px;background:#8db4e6"></div>
<div class="a" style="left:280.5px;top:433px;width:688.5px;height:17px;background:#e3e2e0"></div>
<div class="a" style="left:280.5px;top:450px;width:688.5px;height:1px;background:#a9a8a6"></div>
<div class="t" style="left:280.50px;top:432.29px;font-size:8.7px;color:#3c3b37;">swingclient.product [Eclipse Application] /usr/lib/jvm/java-7-openjdk-amd64/bin/java (05.03.2013 11:07:19)</div>
<svg class="a" style="left:777px;top:438px" width="8" height="8" viewBox="0 0 8 8"><rect x=".5" y=".5" width="7.5" height="7.5" fill="#e8343c" stroke="#c02028" stroke-width=".6"/></svg>
<svg class="a" style="left:795.5px;top:437.5px" width="9" height="9" viewBox="0 0 9 9"><path d="M1.5 1.5 L7.5 7.5 M7.5 1.5 L1.5 7.5" stroke="#cfcecc" stroke-width="2"/></svg>
<svg class="a" style="left:813px;top:436.5px" width="12" height="11" viewBox="0 0 12 11"><path d="M1.5 1.5 L7.5 7.5 M7.5 1.5 L1.5 7.5 M4.5 3.5 L10.5 9.5 M10.5 3.5 L4.5 9.5" stroke="#d2d1cf" stroke-width="1.8"/></svg>
<div class="a" style="left:829.5px;top:436px;width:1px;height:13px;background:#cfcecc"></div>
<svg class="a" style="left:836px;top:436.5px" width="12" height="11" viewBox="0 0 12 11"><path d="M.5 .5 L5 .5 L7.5 3 L7.5 10 L.5 10Z" fill="#f4f4f4" stroke="#8a94a8" stroke-width=".6"/><path d="M6.5 6 L10.5 10 M10.5 6 L6.5 10" stroke="#333" stroke-width="1.3"/></svg>
<svg class="a" style="left:854px;top:436px" width="12" height="12" viewBox="0 0 12 12"><rect x="5" y=".5" width="6.5" height="10.5" fill="#e9eef5" stroke="#6a7a98" stroke-width=".6"/><rect x="8.5" y="3" width="2.2" height="5" fill="#4a6ab0"/><rect x=".5" y="6" width="6" height="5" fill="#f0c040" stroke="#a07818" stroke-width=".5"/><path d="M2 6 L2 4 Q3.5 2 5 4 L5 6" stroke="#a07818" fill="none" stroke-width=".8"/></svg>
<svg class="a" style="left:870px;top:436.5px" width="12" height="11" viewBox="0 0 12 11"><rect x="2" y=".5" width="9.5" height="7" fill="#dbe7f5" stroke="#3f6fb0" stroke-width=".8"/><rect x=".5" y="4" width="6" height="5" fill="#eaf1fa" stroke="#3f6fb0" stroke-width=".8"/><rect x="2" y="9.5" width="3" height="1.3" fill="#3f6fb0"/></svg>
<svg class="a" style="left:886px;top:436.5px" width="12" height="11" viewBox="0 0 12 11"><rect x="2" y=".5" width="9.5" height="7" fill="#dbe7f5" stroke="#3f6fb0" stroke-width=".8"/><path d="M6 2 L9 5.5 M9 2 L6 5.5" stroke="#d03030" stroke-width="1.1"/><rect x=".5" y="4" width="6" height="5" fill="#eaf1fa" stroke="#3f6fb0" stroke-width=".8"/><rect x="2" y="9.5" width="3" height="1.3" fill="#3f6fb0"/></svg>
<div class="a" style="left:901px;top:436px;width:1px;height:13px;background:#cfcecc"></div>
<svg class="a" style="left:907px;top:436px" width="12" height="12" viewBox="0 0 12 12"><rect x=".5" y="3.5" width="9" height="7" fill="#dbe7f5" stroke="#3f6fb0" stroke-width=".8"/><rect x=".8" y="3.8" width="8.4" height="1.8" fill="#3f6fb0"/><path d="M5 6 L10 1" stroke="#2a8a3a" stroke-width="1.8"/><circle cx="10" cy="1.5" r="1.5" fill="#3aa048"/></svg>
<svg class="a" style="left:925px;top:436.5px" width="10" height="11" viewBox="0 0 10 11"><rect x=".5" y=".5" width="8.5" height="7" fill="#efefee" stroke="#c7c6c4" stroke-width=".8"/><rect x="3" y="8.5" width="3.5" height="1.5" fill="#cfcecc"/></svg>
<svg class="a" style="left:935.5px;top:440px" width="7" height="5" viewBox="0 0 7 5"><path d="M0.7 0.8 L3.5 3.6 L6.3 0.8" stroke="#a8a7a5" stroke-width="1" fill="none"/></svg>
<svg class="a" style="left:947px;top:435.5px" width="12" height="12" viewBox="0 0 12 12"><rect x=".5" y="2.5" width="9.5" height="8.5" rx=".6" fill="#eef6fb" stroke="#bdb49a" stroke-width=".8"/><rect x=".9" y="2.8" width="8.8" height="2" fill="#5b94cf"/><path d="M8.5 0 L10.8 2.3 L8.5 4.6 L6.2 2.3Z" fill="#e3b838"/></svg>
<svg class="a" style="left:960px;top:440px" width="7" height="5" viewBox="0 0 7 5"><path d="M0.7 0.8 L3.5 3.8 L6.3 0.8" stroke="#2a2a2a" stroke-width="1.4" fill="none"/></svg>
<div class="a" style="left:280.5px;top:451px;width:677px;height:106px;background:#fff"></div>
<div class="t mono" style="left:289.00px;top:510.39px;font-size:9.06px;color:#000;">MTab #0 Product (180) - GridField[DocumentNote=asd, IsDisplayed=true] - asd - asdasd</div>
<div class="a" style="left:281.5px;top:532.3px;width:676px;height:10.6px;background:#3f86d8"></div>
<div class="a" style="left:281.5px;top:451px;width:676px;height:106px;overflow:hidden">
<div class="t mono" style="left:-2.70px;top:81.89px;font-size:9.06px;color:#fff;">f6de0e6940, 2|0|IsManufactured=N} - 2 - MTab #0 Product (180) - GridField[DocumentNote=asdas, IsDisplayed=true] - asdas - asd</div>
</div>
<div class="a" style="left:957.5px;top:451px;width:11.5px;height:106px;background:#e3e2e0"></div>
<div class="a" style="left:958.5px;top:460px;width:9.5px;height:78px;background:#b6b5b3;border:1px solid #8e8d8b;border-radius:3px"></div>
<svg class="a" style="left:959px;top:452.5px" width="9" height="6" viewBox="0 0 9 6"><path d="M1.2 4.5 L4.5 1.4 L7.8 4.5" stroke="#2a2a2a" stroke-width="1.2" fill="none"/></svg>
<div class="a" style="left:959.5px;top:527.5px;width:7.5px;height:10px;background:linear-gradient(#f4f4f3,#dcdbd9);border:1px solid #8e8d8b;border-radius:2px"></div>
<svg class="a" style="left:959px;top:540px" width="9" height="6" viewBox="0 0 9 6"><path d="M1 4.5 L4.5 1.2 L8 4.5" stroke="#2a2a2a" stroke-width="1.2" fill="none"/></svg>
<svg class="a" style="left:959px;top:549px" width="9" height="6" viewBox="0 0 9 6"><path d="M1 1.2 L4.5 4.5 L8 1.2" stroke="#9a9a9a" stroke-width="1" fill="none"/></svg>
<div class="a" style="left:280.5px;top:557px;width:688.5px;height:11.5px;background:#e3e2e0"></div>
<svg class="a" style="left:281.5px;top:558px" width="7" height="9" viewBox="0 0 7 9"><path d="M5 1 L1.5 4.5 L5 8" stroke="#2a2a2a" stroke-width="1.1" fill="none"/></svg>
<div class="a" style="left:290px;top:557.5px;width:645px;height:8.5px;background:#b6b5b3;border-radius:3px 0 0 3px"></div>
<div class="a" style="left:929px;top:557.5px;width:11px;height:8.5px;background:linear-gradient(#f4f4f3,#dcdbd9);border:1px solid #8e8d8b;border-radius:2px"></div>
<svg class="a" style="left:942px;top:558px" width="7" height="9" viewBox="0 0 7 9"><path d="M5 1 L1.5 4.5 L5 8" stroke="#2a2a2a" stroke-width="1.1" fill="none"/></svg>
<svg class="a" style="left:950px;top:558px" width="7" height="9" viewBox="0 0 7 9"><path d="M1.5 1 L5 4.5 L1.5 8" stroke="#9a9a9a" stroke-width="1" fill="none"/></svg>
<div class="a" style="left:973px;top:82px;width:20px;height:61px;border:1px solid #f4f4f3;border-radius:4px;background:#e3e2e0;box-shadow:inset -1px -1px 0 #cfcecc"></div>
<div class="a" style="left:975px;top:85px;width:16.5px;height:2.8px;background:linear-gradient(#f8f8f7,#d0cfcd);border-bottom:1px solid #aaa9a7;border-radius:1px"></div>
<svg class="a" style="left:979.5px;top:93.5px" width="8" height="7" viewBox="0 0 8 7"><rect x="2.5" y=".5" width="4.5" height="3.5" fill="#f4f4f4" stroke="#666" stroke-width=".8"/><rect x=".8" y="2.5" width="4.5" height="3.5" fill="#f4f4f4" stroke="#555" stroke-width=".8"/></svg>
<svg class="a" style="left:978px;top:108px" width="10" height="11" viewBox="0 0 10 11"><rect x=".5" y=".5" width="3.5" height="3.5" fill="#6ab0e8" stroke="#2a7ac8" stroke-width=".6"/><rect x=".5" y="6.5" width="3.5" height="3.5" fill="#6ab0e8" stroke="#2a7ac8" stroke-width=".6"/><path d="M4.5 2.2 L9.5 2.2 M4.5 8.2 L9.5 8.2" stroke="#5a9ad8" stroke-width="1"/><rect x="5.5" y="4.3" width="1.8" height="1.6" fill="#2a6ab8"/></svg>
<svg class="a" style="left:979.5px;top:125.5px" width="9" height="11" viewBox="0 0 9 11"><defs><linearGradient id="bk" x1="0" y1="0" x2="0" y2="1"><stop offset="0" stop-color="#c8ccd8"/><stop offset="1" stop-color="#a8a0d8"/></linearGradient></defs><path d="M.5 .5 L7.5 .5 L7.5 10 L4 8.3 L.5 10Z" fill="url(#bk)" stroke="#6a6a7a" stroke-width=".8"/><path d="M2.2 1.5 L2.2 7 M4 1.5 L4 7 M5.8 1.5 L5.8 7" stroke="#9aa0b8" stroke-width=".5"/></svg>
<div class="a" style="left:32px;top:572px;width:2.5px;height:14.5px;background:#f4f3f2;border-right:1px solid #b5b4b2;border-bottom:1px solid #b5b4b2;border-radius:1px"></div>
<svg class="a" style="left:41px;top:574.5px" width="11" height="10" viewBox="0 0 11 10"><rect x=".5" y="1.5" width="4" height="8" fill="#eef6fb" stroke="#8a95a8" stroke-width=".5"/><rect x=".5" y="1.5" width="4" height="1.6" fill="#3f7ac8"/><path d="M7.5 0.5 L10 3 L7.5 5.5 L5 3Z" fill="#f0c040" stroke="#b88818" stroke-width=".5"/></svg>
<div class="a" style="left:800.5px;top:572px;width:1.5px;height:14px;background:#f6f6f5;box-shadow:1px 0 0 #b5b4b2;border-radius:1px"></div>
<svg class="a" style="left:990px;top:586px" width="6" height="6" viewBox="0 0 6 6"><g fill="#cfcecc"><rect x="4" y="0" width="1" height="1"/><rect x="2" y="2" width="1" height="1"/><rect x="4" y="2" width="1" height="1"/><rect x="0" y="4" width="1" height="1"/><rect x="2" y="4" width="1" height="1"/><rect x="4" y="4" width="1" height="1"/></g></svg>
<svg class="a" style="left:500px;top:30px" width="20" height="22" viewBox="0 0 20 22"><path transform="translate(-500 -30)" d="M505.5 35.2 L505.7 45.8 L508.2 43.9 L510.2 47.9 L512.6 46.8 L510.6 42.9 L513.9 42.5 Z" fill="#ececec" stroke="#2e2e2e" stroke-width="1" stroke-linejoin="round"/></svg>
<div class="t" style="left:34.20px;top:43.99px;font-size:8.7px;color:#3c3b37;"><u>F</u>ile</div>
<div class="t" style="left:57.50px;top:43.99px;font-size:8.7px;color:#3c3b37;"><u>E</u>dit</div>
<div class="t" style="left:83.90px;top:43.99px;font-size:8.7px;color:#3c3b37;"><u>S</u>ource</div>
<div class="t" style="left:120.80px;top:43.99px;font-size:8.7px;color:#3c3b37;">Refac<u>t</u>or</div>
<div class="t" style="left:166.50px;top:43.99px;font-size:8.7px;color:#3c3b37;"><u>N</u>avigate</div>
<div class="t" style="left:212.00px;top:43.99px;font-size:8.7px;color:#3c3b37;">Se<u>a</u>rch</div>
<div class="t" style="left:248.30px;top:43.99px;font-size:8.7px;color:#3c3b37;"><u>P</u>roject</div>
<div class="t" style="left:287.00px;top:43.99px;font-size:8.7px;color:#3c3b37;"><u>R</u>un</div>
<div class="t" style="left:312.80px;top:43.99px;font-size:8.7px;color:#3c3b37;"><u>W</u>indow</div>
<div class="t" style="left:354.30px;top:43.99px;font-size:8.7px;color:#3c3b37;"><u>H</u>elp</div>
</body></html>
